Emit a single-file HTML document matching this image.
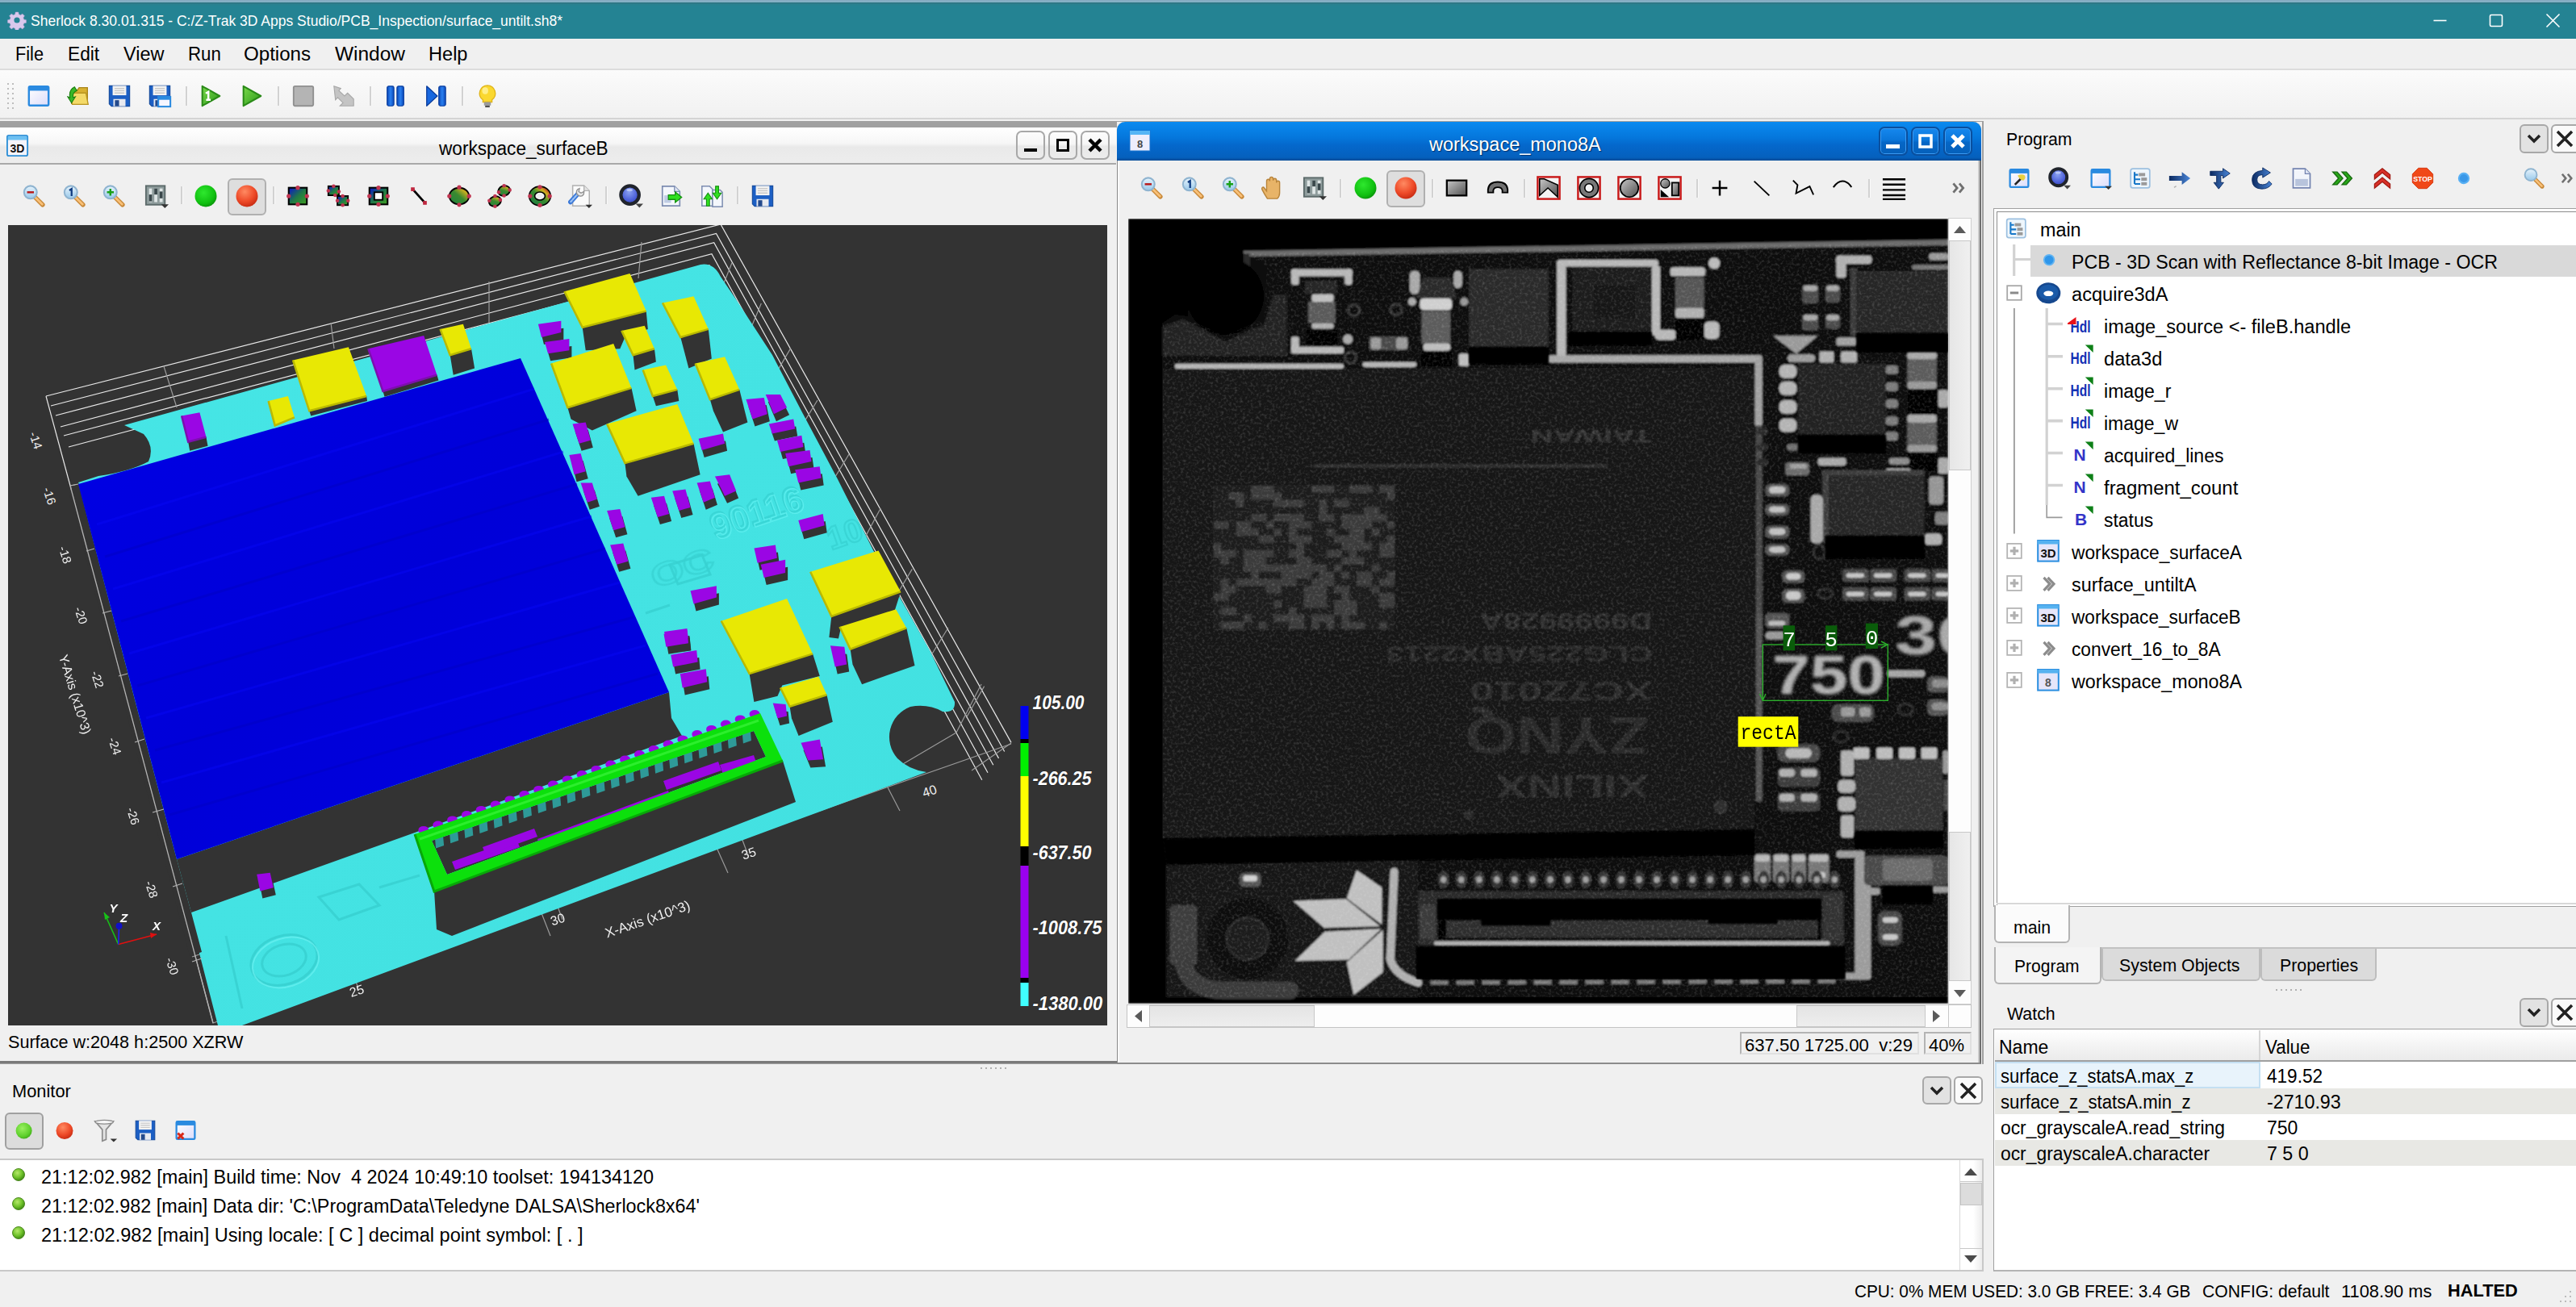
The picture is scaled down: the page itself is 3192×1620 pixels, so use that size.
<!DOCTYPE html>
<html>
<head>
<meta charset="utf-8">
<title>Sherlock</title>
<style>
*{box-sizing:border-box;margin:0;padding:0}
html,body{width:3192px;height:1620px;overflow:hidden;background:#f0f0f0;font-family:"Liberation Sans",sans-serif;color:#000}
.a{position:absolute}
.t{position:absolute;white-space:nowrap;line-height:1}
#titlebar{left:0;top:0;width:3192px;height:48px;background:linear-gradient(#2e7482 0,#2e7482 4px,#2a808f 5px,#248393 8px,#248393 100%)}
#topstrip{left:0;top:0;width:3192px;height:3px;background:linear-gradient(#86a9c0,#84b4c8)}
#menubar{left:0;top:48px;width:3192px;height:39px;background:#f0f0f0;border-bottom:2px solid #dcdcdc}
#toolbar{left:0;top:87px;width:3192px;height:61px;background:linear-gradient(#fbfbfb,#f1f1f1);border-bottom:2px solid #d4d4d4}
#mdi{left:0;top:150px;width:2458px;height:1169px;background:#a0a0a0}
.sep{position:absolute;width:2px;background:#d9d9d9}
.wb{width:36px;height:36px;border:2px solid #a8a8a8;border-radius:7px;background:linear-gradient(#fcfcfc 0%,#f6f6f6 45%,#e8e8e8 55%,#ececec 100%)}
.wb2{width:36px;height:36px;border:2px solid #0a4f9e;border-radius:7px;background:linear-gradient(#1688ee 0%,#0a76da 45%,#0566c6 55%,#0560ba 100%);box-shadow:inset 0 0 0 1px #3a9af2}
.tr{font-size:24px}
.wr{font-size:24px}
.lg{font-size:24px}
.btn{position:absolute;border:2px solid #a8a8a8;border-radius:6px;background:#e2e2e2}
</style>
</head>
<body>
<!--ICONDEFS_B--><svg width="0" height="0" style="position:absolute"><defs>
<linearGradient id="iLav" x1="0" y1="0" x2="1" y2="1"><stop offset="0" stop-color="#ffffff"/><stop offset="1" stop-color="#dcdcfa"/></linearGradient>
<linearGradient id="iGlass" x1="0" y1="0" x2="0" y2="1"><stop offset="0" stop-color="#e8f4fc"/><stop offset="1" stop-color="#98c8ea"/></linearGradient>
<radialGradient id="iG" cx="40%" cy="35%" r="70%"><stop offset="0" stop-color="#2ee82e"/><stop offset="0.7" stop-color="#10c010"/><stop offset="1" stop-color="#0a900a"/></radialGradient>
<radialGradient id="iLime" cx="40%" cy="35%" r="70%"><stop offset="0" stop-color="#9af060"/><stop offset="0.7" stop-color="#5ed02c"/><stop offset="1" stop-color="#3ea818"/></radialGradient>
<radialGradient id="iR" cx="40%" cy="30%" r="75%"><stop offset="0" stop-color="#ff8a62"/><stop offset="0.6" stop-color="#ee4a28"/><stop offset="1" stop-color="#c42810"/></radialGradient>
<linearGradient id="iBG" x1="0" y1="0" x2="1" y2="1"><stop offset="0" stop-color="#0a10d0"/><stop offset="0.5" stop-color="#207848"/><stop offset="1" stop-color="#40a020"/></linearGradient>
<linearGradient id="iGY" x1="0" y1="1" x2="1" y2="0"><stop offset="0" stop-color="#208040"/><stop offset="0.5" stop-color="#3a8a30"/><stop offset="0.8" stop-color="#d0b020"/><stop offset="1" stop-color="#c03020"/></linearGradient>
<linearGradient id="iGr" x1="0" y1="0" x2="1" y2="1"><stop offset="0" stop-color="#c8c8c8"/><stop offset="1" stop-color="#505050"/></linearGradient>
<linearGradient id="iPlay" x1="0" y1="0" x2="1" y2="1"><stop offset="0" stop-color="#7ad84a"/><stop offset="1" stop-color="#2a9a1a"/></linearGradient>
<linearGradient id="iBl" x1="0" y1="0" x2="1" y2="0"><stop offset="0" stop-color="#0a48b8"/><stop offset="0.5" stop-color="#2a80f0"/><stop offset="1" stop-color="#0a48b8"/></linearGradient>
<radialGradient id="iLens" cx="45%" cy="35%" r="65%"><stop offset="0" stop-color="#8aa0f0"/><stop offset="0.7" stop-color="#4a5ed8"/><stop offset="1" stop-color="#3848b8"/></radialGradient>
<linearGradient id="iArr" x1="0" y1="0" x2="1" y2="0"><stop offset="0" stop-color="#0c2a60"/><stop offset="1" stop-color="#4a86d8"/></linearGradient>
<symbol id="mag" viewBox="0 0 32 32"><path d="M18 18 L27.5 27.5" stroke="#c88838" stroke-width="6" stroke-linecap="round"/><path d="M18.5 18.5 L27 27" stroke="#f8c078" stroke-width="3" stroke-linecap="round"/><circle cx="11.5" cy="11" r="8.5" fill="url(#iGlass)" stroke="#8fb4d0" stroke-width="2.2"/></symbol>
<symbol id="magm" viewBox="0 0 32 32"><use href="#mag"/><path d="M7 11 H16" stroke="#b81818" stroke-width="2.6"/></symbol>
<symbol id="mag1" viewBox="0 0 32 32"><use href="#mag"/><path d="M9.5 8.5 L12.5 6.5 V16" stroke="#0e3a80" stroke-width="2.4" fill="none"/></symbol>
<symbol id="magp" viewBox="0 0 32 32"><use href="#mag"/><path d="M7 11 H16 M11.5 6.5 V15.5" stroke="#18a018" stroke-width="2.6"/></symbol>
<symbol id="sliders" viewBox="0 0 32 32"><rect x="2" y="2.5" width="25" height="25" fill="#8e9c9c" stroke="#5c6a6a" stroke-width="2"/><rect x="6" y="6" width="4" height="18" fill="#dfe6e6"/><rect x="13" y="6" width="4" height="18" fill="#dfe6e6"/><rect x="20" y="6" width="4" height="18" fill="#dfe6e6"/><rect x="6" y="14" width="4" height="9" fill="#39474a"/><rect x="13" y="6" width="4" height="8" fill="#39474a"/><rect x="20" y="10" width="4" height="9" fill="#39474a"/><path d="M22 27 H32 L27 32 Z" fill="#333"/></symbol>
<symbol id="gc" viewBox="0 0 32 32"><circle cx="16" cy="16" r="13.5" fill="url(#iG)"/></symbol>
<symbol id="rc" viewBox="0 0 32 32"><circle cx="16" cy="16" r="13.5" fill="url(#iR)"/></symbol>
<symbol id="roi1" viewBox="0 0 32 32"><rect x="4" y="5" width="24" height="22" fill="url(#iBG)" stroke="#000" stroke-width="2.2"/><g fill="#c03450"><circle cx="16" cy="5" r="2.8"/><circle cx="16" cy="27" r="2.8"/><circle cx="4" cy="16" r="2.8"/><circle cx="28" cy="16" r="2.8"/></g></symbol>
<symbol id="roi2" viewBox="0 0 32 32"><rect x="3" y="3" width="14" height="12" fill="url(#iBG)" stroke="#000" stroke-width="2"/><rect x="15" y="16" width="14" height="12" fill="url(#iBG)" stroke="#000" stroke-width="2"/><g fill="#c03450"><circle cx="10" cy="3" r="2.4"/><circle cx="3" cy="9" r="2.4"/><circle cx="17" cy="10" r="2.4"/><circle cx="22" cy="16" r="2.4"/><circle cx="29" cy="22" r="2.4"/><circle cx="22" cy="28" r="2.4"/><circle cx="12" cy="15" r="2.4"/><circle cx="15" cy="22" r="2.4"/></g></symbol>
<symbol id="roi3" viewBox="0 0 32 32"><rect x="4" y="5" width="24" height="22" fill="url(#iBG)" stroke="#000" stroke-width="2.2"/><rect x="10.5" y="11" width="11" height="10" fill="#fff" stroke="#000" stroke-width="2"/><g fill="#c03450"><circle cx="16" cy="5" r="2.8"/><circle cx="16" cy="27" r="2.8"/><circle cx="4" cy="16" r="2.8"/><circle cx="28" cy="16" r="2.8"/></g></symbol>
<symbol id="roi4" viewBox="0 0 32 32"><path d="M8 7 L24 25" stroke="#000" stroke-width="3"/><rect x="5.5" y="4.5" width="5" height="5" fill="#c02840"/><rect x="21.5" y="22.5" width="5" height="5" fill="#c02840"/></symbol>
<symbol id="roi5" viewBox="0 0 32 32"><ellipse cx="16" cy="16" rx="13" ry="11" fill="url(#iGY)" stroke="#000" stroke-width="2"/><g fill="#c03450"><circle cx="16" cy="4.5" r="2.8"/><circle cx="16" cy="27.5" r="2.8"/><circle cx="3" cy="16" r="2.8"/><circle cx="29" cy="16" r="2.8"/></g></symbol>
<symbol id="roi6" viewBox="0 0 32 32"><ellipse cx="22" cy="9" rx="8" ry="6.5" fill="url(#iGY)" stroke="#000" stroke-width="2" transform="rotate(-20 22 9)"/><ellipse cx="10" cy="23" rx="8" ry="6.5" fill="url(#iGY)" stroke="#000" stroke-width="2" transform="rotate(-20 10 23)"/><g fill="#c03450"><circle cx="22" cy="2.5" r="2.4"/><circle cx="29.5" cy="8" r="2.4"/><circle cx="15" cy="11" r="2.4"/><circle cx="10" cy="16" r="2.4"/><circle cx="2.5" cy="22" r="2.4"/><circle cx="10" cy="29.5" r="2.4"/><circle cx="17" cy="21" r="2.4"/><circle cx="22" cy="15.5" r="2.4"/></g></symbol>
<symbol id="roi7" viewBox="0 0 32 32"><ellipse cx="16" cy="16" rx="10.5" ry="9" fill="none" stroke="#000" stroke-width="9"/><ellipse cx="16" cy="16" rx="10.5" ry="9" fill="none" stroke="url(#iGY)" stroke-width="5.5"/><g fill="#c03450"><circle cx="16" cy="4" r="2.8"/><circle cx="16" cy="28" r="2.8"/><circle cx="3" cy="16" r="2.8"/><circle cx="29" cy="16" r="2.8"/></g></symbol>
<symbol id="wrench" viewBox="0 0 32 32"><path d="M6 2 H21 L28 9 V29 H6 Z" fill="#fbfbfb" stroke="#b0b0b0" stroke-width="1.6"/><path d="M21 2 V9 H28" fill="#e4e4e4" stroke="#b0b0b0" stroke-width="1.4"/><path d="M3 24 L13 13" stroke="#3a78d8" stroke-width="6" stroke-linecap="round"/><path d="M3.5 23.5 L12 14" stroke="#9cc2f4" stroke-width="2.4" stroke-linecap="round" stroke-dasharray="2 2"/><path d="M12 14 q-3 -6 3 -8 l-1 4 l3 2 l4 -2 q0 7 -6 6 z" fill="#e8e8e8" stroke="#909090" stroke-width="1.4"/><path d="M23 27.5 H32 L27.5 32 Z" fill="#333"/></symbol>
<symbol id="lens" viewBox="0 0 32 32"><circle cx="14.5" cy="14.5" r="12" fill="url(#iLens)" stroke="#20242c" stroke-width="4.5"/><ellipse cx="14" cy="8" rx="4" ry="1.8" fill="#c8d4fa" opacity="0.8"/><path d="M22 26 H32 L27 31.5 Z" fill="#444"/></symbol>
<symbol id="pgarrow" viewBox="0 0 32 32"><path d="M4 3 H20 L27 10 V29 H4 Z" fill="#f4f7fc" stroke="#7c8cb0" stroke-width="1.8"/><path d="M20 3 V10 H27" fill="#dfe6f4" stroke="#7c8cb0" stroke-width="1.4"/><rect x="6.5" y="15" width="9" height="10" fill="#c0cce4"/><path d="M12 14.5 H21 V10.5 L29.5 17.5 L21 24.5 V20.5 H12 Z" fill="#30e020" stroke="#149010" stroke-width="1.4"/></symbol>
<symbol id="pg2" viewBox="0 0 32 32"><path d="M3 3 H13 L17 7 V29 H3 Z" fill="#f4f7fc" stroke="#7c8cb0" stroke-width="1.6"/><path d="M17 8 H27 L30 11 V30 H17 Z" fill="#f4f7fc" stroke="#7c8cb0" stroke-width="1.6"/><path d="M9 29 V20 H5.5 L11 12 L16.5 20 H13 V29 Z" fill="#30e020" stroke="#149010" stroke-width="1.2"/><path d="M21 3 V12 H17.5 L23 20 L28.5 12 H25 V3 Z" fill="#30e020" stroke="#149010" stroke-width="1.2"/></symbol>
<symbol id="floppy" viewBox="0 0 32 32"><path d="M2.5 2.5 H29.5 V29.5 H5.5 L2.5 26.5 Z" fill="#1c5fc4" stroke="#144a9c" stroke-width="1.2"/><rect x="7" y="2.5" width="18" height="12.5" fill="#f2f2f2"/><path d="M9.5 6 H22.5 M9.5 9 H22.5 M9.5 12 H22.5" stroke="#c8c8c8" stroke-width="1.4"/><rect x="8" y="20" width="16" height="9.5" fill="#e8eaf0"/><rect x="10" y="21.5" width="5.5" height="8" fill="#244a8c"/></symbol>
<symbol id="floppy2" viewBox="0 0 32 32"><use href="#floppy"/><rect x="14" y="17" width="16" height="13" fill="#f6f6ff" stroke="#2a8ae0" stroke-width="2.2"/><rect x="14" y="17" width="16" height="4" fill="#2a8ae0"/></symbol>
<symbol id="win" viewBox="0 0 32 32"><rect x="3" y="3.5" width="26" height="25" rx="1.5" fill="url(#iLav)" stroke="#2a8ae0" stroke-width="2.6"/><rect x="3" y="3.5" width="26" height="5.5" fill="#2a8ae0"/></symbol>
<symbol id="windd" viewBox="0 0 32 32"><use href="#win"/><path d="M22 27 H32 L27 32 Z" fill="#333"/></symbol>
<symbol id="winwand" viewBox="0 0 32 32"><use href="#win"/><path d="M10 25 L19 16" stroke="#222" stroke-width="3"/><path d="M14 12 q6 -3 10 0 q2 4 -2 7 q-5 0 -8 -7z" fill="#e8d040"/></symbol>
<symbol id="winx" viewBox="0 0 32 32"><use href="#win"/><path d="M5 20 L13 28 M13 20 L5 28" stroke="#d82818" stroke-width="3.6"/></symbol>
<symbol id="folder" viewBox="0 0 32 32"><path d="M6 8 H14 L16 5 H27 V26 H6 Z" fill="#d8b030" stroke="#a88418" stroke-width="1.4"/><path d="M4 12 H25 L28 27 H7 Z" fill="#f4da68" stroke="#b89420" stroke-width="1.4"/><path d="M10 4 q-8 4 -6 14 l-3 -1 l5 8 l5 -8 l-3 1 q-1 -7 5 -9 z" fill="#38b828" stroke="#1a8010" stroke-width="1.2"/></symbol>
<symbol id="play" viewBox="0 0 32 32"><path d="M5 3 L28 16 L5 29 Z" fill="url(#iPlay)" stroke="#2a8a18" stroke-width="2.2" stroke-linejoin="round"/></symbol>
<symbol id="play1" viewBox="0 0 32 32"><use href="#play"/><path d="M9.5 12.5 L13 10.5 V21 M10 21 H16" stroke="#fff" stroke-width="2.6" fill="none"/></symbol>
<symbol id="stopsq" viewBox="0 0 32 32"><rect x="3" y="3" width="26" height="26" rx="2" fill="#b4b4b4" stroke="#909090" stroke-width="2"/></symbol>
<symbol id="garrow" viewBox="0 0 32 32"><path d="M3 3 L12 6 L9.5 9 L17 16 L21 12 L29 20 V29 H11 L15 25 L8 18 L5 21 Z" fill="#c4c4c4" stroke="#a8a8a8" stroke-width="1.2"/></symbol>
<symbol id="pause" viewBox="0 0 32 32"><rect x="5" y="3" width="9" height="26" rx="2" fill="url(#iBl)" stroke="#0a3c9c" stroke-width="1.2"/><rect x="18" y="3" width="9" height="26" rx="2" fill="url(#iBl)" stroke="#0a3c9c" stroke-width="1.2"/></symbol>
<symbol id="stepf" viewBox="0 0 32 32"><path d="M4 3 L18 16 L4 29 Z" fill="#1868e0" stroke="#0a3c9c" stroke-width="1.4" stroke-linejoin="round"/><rect x="20" y="3" width="9" height="26" rx="2" fill="url(#iBl)" stroke="#0a3c9c" stroke-width="1.2"/></symbol>
<symbol id="bulb" viewBox="0 0 32 32"><path d="M16 2 a10.5 10.5 0 0 1 6 19 v3 h-12 v-3 a10.5 10.5 0 0 1 6 -19z" fill="#fad830" stroke="#e0b418" stroke-width="1.4"/><ellipse cx="13" cy="9" rx="4" ry="4.5" fill="#fff4a0" opacity="0.8"/><rect x="11.5" y="24" width="9" height="4.5" fill="#9a9a9a"/><rect x="13" y="28.5" width="6" height="2.5" fill="#505050"/></symbol>
<symbol id="hand" viewBox="0 0 32 32"><path d="M9 30 q-4 -6 -7 -12 q-1 -3 2 -3 l4 5 V7 q0 -2.5 2.2 -2.5 q2 0 2 2.5 V4 q0 -2.500 2.200 -2.500 q2.200 0 2.200 2.500 V6 q0 -2.500 2.200 -2.500 q2.200 0 2.200 2.500 V9 q0 -2.300 2 -2.300 q2.200 0 2.200 2.300 V22 q0 5 -3 8 z" fill="#e8b468" stroke="#b8843a" stroke-width="1.5"/></symbol>
<symbol id="grect" viewBox="0 0 32 32"><rect x="3" y="6" width="26" height="20" fill="url(#iGr)" stroke="#000" stroke-width="2.4"/></symbol>
<symbol id="arcic" viewBox="0 0 32 32"><path d="M3 22 V18 Q4 8 16 8 Q28 8 29 18 V22 H22 V19 Q21 15 16 15 Q11 15 10 19 V22 Z" fill="#707070" stroke="#000" stroke-width="2"/></symbol>
<symbol id="rf1" viewBox="0 0 32 32"><rect x="1.500" y="1.500" width="29" height="29" fill="#f4f4f4" stroke="#c81818" stroke-width="2.6"/><path d="M4 4 H10 L28 12 V28 L15 16 L4 26 Z" fill="url(#iGr)" stroke="#000" stroke-width="1.6"/></symbol>
<symbol id="rf2" viewBox="0 0 32 32"><rect x="1.500" y="1.500" width="29" height="29" fill="#f4f4f4" stroke="#c81818" stroke-width="2.6"/><circle cx="16" cy="16" r="9" fill="none" stroke="#000" stroke-width="8.500"/><circle cx="16" cy="16" r="9" fill="none" stroke="#787878" stroke-width="5"/></symbol>
<symbol id="rf3" viewBox="0 0 32 32"><rect x="1.500" y="1.500" width="29" height="29" fill="#f4f4f4" stroke="#c81818" stroke-width="2.6"/><circle cx="16" cy="16" r="12" fill="url(#iGr)" stroke="#000" stroke-width="1.8"/></symbol>
<symbol id="rf4" viewBox="0 0 32 32"><rect x="1.500" y="1.500" width="29" height="29" fill="#f4f4f4" stroke="#c81818" stroke-width="2.6"/><circle cx="10" cy="10" r="6" fill="url(#iGr)" stroke="#000" stroke-width="1.4"/><rect x="19" y="9" width="9" height="17" fill="url(#iGr)" stroke="#000" stroke-width="2"/><path d="M4 18 L15 28 H4 Z" fill="#000"/></symbol>
<symbol id="plus" viewBox="0 0 32 32"><path d="M6 16 H26 M16 6 V26" stroke="#000" stroke-width="2.6"/></symbol>
<symbol id="dline" viewBox="0 0 32 32"><path d="M6 7 L26 26" stroke="#000" stroke-width="2"/></symbol>
<symbol id="pline" viewBox="0 0 32 32"><path d="M3 6 L9 12 L7 23 L25 14 L30 25" stroke="#000" stroke-width="2" fill="none"/></symbol>
<symbol id="arcl" viewBox="0 0 32 32"><path d="M4 15 Q10 7 16 7 Q23 7 28 15" stroke="#000" stroke-width="2.2" fill="none"/></symbol>
<symbol id="hlines" viewBox="0 0 32 32"><path d="M1 4.500 H31 M1 11.500 H31 M1 18.500 H31 M1 25.500 H31 M1 31 H31" stroke="#000" stroke-width="2.6"/></symbol>
<symbol id="chev" viewBox="0 0 32 32"><path d="M9 10 L14 16 L9 22 M17 10 L22 16 L17 22" stroke="#707070" stroke-width="3" fill="none"/></symbol>
<symbol id="tree" viewBox="0 0 32 32"><rect x="2.500" y="2.500" width="27" height="27" rx="3" fill="#eef6fc" stroke="#9cc0e0" stroke-width="2"/><path d="M8 7 V24 M8 11 H13 M8 17.500 H16 M8 24 H16" stroke="#1878c8" stroke-width="2.400" fill="none"/><rect x="14" y="8.500" width="9" height="4.500" fill="#9a9a9a"/><rect x="17.500" y="15" width="8" height="4.500" fill="#9a9a9a"/><rect x="17.500" y="21.500" width="8" height="4.500" fill="#9a9a9a"/></symbol>
<symbol id="arr" viewBox="0 0 32 32"><path d="M1 12.500 H19 V7 L31 16 L19 25 V19.500 H1 Z" fill="url(#iArr)"/><path d="M8 29 l3 -2" stroke="#b0b0b0" stroke-width="1.500"/></symbol>
<symbol id="tarr" viewBox="0 0 32 32"><path d="M2 6 H20 V2 L30 9 L20 16 V12 H17 V22 H21 L14 31 L7 22 H11 V12 H2 Z" fill="url(#iArr)" stroke="#0c2a60" stroke-width="1"/></symbol>
<symbol id="carr" viewBox="0 0 32 32"><path d="M18 1 L29 8 L18 15 V11 Q10 11 10 18 Q10 25 18 25 Q24 25 27 20 L31 24 Q26 31 17 31 Q3 31 3 18 Q3 6 18 5 Z" fill="url(#iArr)" stroke="#0c2a60" stroke-width="1"/></symbol>
<symbol id="page" viewBox="0 0 32 32"><path d="M4 2.500 H21 L28 9.500 V29.500 H4 Z" fill="#f2f5fb" stroke="#7484b0" stroke-width="2"/><path d="M21 2.500 V9.500 H28" fill="#dfe6f4" stroke="#7484b0" stroke-width="1.400"/><rect x="7" y="17" width="18" height="10" fill="#b8c4dc"/></symbol>
<symbol id="gg" viewBox="0 0 32 32"><path d="M2 7 H8 L16 16 L8 25 H2 L10 16 Z M15 7 H21 L29 16 L21 25 H15 L23 16 Z" fill="#28a818" stroke="#186a10" stroke-width="1.600"/></symbol>
<symbol id="rr" viewBox="0 0 32 32"><path d="M5 17 V11 L16 2 L27 11 V17 L16 8 Z M5 30 V24 L16 15 L27 24 V30 L16 21 Z" fill="#d83028" stroke="#a01810" stroke-width="1.400"/></symbol>
<symbol id="stopsign" viewBox="0 0 32 32"><path d="M10 1.500 H22 L30.500 10 V22 L22 30.500 H10 L1.500 22 V10 Z" fill="#f04818" stroke="#d03008" stroke-width="1"/><text x="16" y="20" font-family="Liberation Sans" font-weight="bold" font-size="10" fill="#fff" text-anchor="middle">STOP</text></symbol>
<symbol id="bdot" viewBox="0 0 32 32"><circle cx="16" cy="16" r="7" fill="#3a98e8" stroke="#58b0f4" stroke-width="2.400"/></symbol>
<symbol id="magn" viewBox="0 0 32 32"><use href="#mag"/></symbol>
<symbol id="filter" viewBox="0 0 32 32"><path d="M2 3 H26 L16.500 14 V27 L11.500 29 V14 Z" fill="#e4e4e4" stroke="#8c8c8c" stroke-width="1.800"/><ellipse cx="14" cy="4" rx="12" ry="2.500" fill="#f8f8f8" stroke="#8c8c8c" stroke-width="1.400"/><path d="M22 26 H31 L26.500 30.500 Z" fill="#333"/></symbol>
</defs></svg><!--ICONDEFS_E-->
<!-- ===== main window chrome ===== -->
<div class="a" id="titlebar"></div>
<div class="a" id="topstrip"></div>
<div class="t" id="ttl" style="left:38.0px;top:17.3px;color:#fff;font-size:18.7px;transform:scaleX(0.9366);transform-origin:0 0">Sherlock 8.30.01.315 - C:/Z-Trak 3D Apps Studio/PCB_Inspection/surface_untilt.sh8*</div>
<svg class="a" style="left:3000px;top:8px" width="192" height="36"><g stroke="#fff" stroke-width="1.600" fill="none"><path d="M15.500 17.500 H31.500"/><rect x="85.500" y="10.500" width="15" height="14" rx="1.500"/><path d="M155.500 9.500 L171.500 25.500 M171.500 9.500 L155.500 25.500"/></g></svg>
<svg class="a" style="left:9px;top:13px" width="24" height="24" viewBox="0 0 24 24"><g fill="#d9c8ec" stroke="#b8a4d4" stroke-width="0.600"><path d="M10 1 h4 l0.600 3 l2.400 1 l2.600 -1.700 l2.800 2.800 l-1.700 2.600 l1 2.400 l3 0.600 v4 l-3 0.600 l-1 2.400 l1.700 2.600 l-2.800 2.800 l-2.600 -1.700 l-2.400 1 l-0.600 3 h-4 l-0.600 -3 l-2.400 -1 l-2.600 1.700 l-2.800 -2.800 l1.700 -2.600 l-1 -2.400 l-3 -0.600 v-4 l3 -0.600 l1 -2.400 l-1.700 -2.600 l2.800 -2.800 l2.600 1.700 l2.400 -1 z" transform="translate(1.200 1.200) scale(0.900)"/></g><circle cx="12" cy="12" r="3.600" fill="#248393"/></svg>
<div class="a" id="menubar"></div>
<div class="t m" id="m1" style="left:18.6px;top:56.3px;font-size:23.5px;transform:scaleX(0.9241);transform-origin:0 0">File</div>
<div class="t m" id="m2" style="left:83.5px;top:56.3px;font-size:23.5px;transform:scaleX(0.9679);transform-origin:0 0">Edit</div>
<div class="t m" id="m3" style="left:152.6px;top:56.3px;font-size:23.5px;transform:scaleX(0.9977);transform-origin:0 0">View</div>
<div class="t m" id="m4" style="left:232.5px;top:56.3px;font-size:23.5px;transform:scaleX(0.9461);transform-origin:0 0">Run</div>
<div class="t m" id="m5" style="left:302.4px;top:56.3px;font-size:23.5px;transform:scaleX(1.0259);transform-origin:0 0">Options</div>
<div class="t m" id="m6" style="left:414.6px;top:56.3px;font-size:23.5px;transform:scaleX(1.0407);transform-origin:0 0">Window</div>
<div class="t m" id="m7" style="left:530.7px;top:56.3px;font-size:23.5px;transform:scaleX(1.0032);transform-origin:0 0">Help</div>
<div class="a" id="toolbar"></div>

<div class="a" id="mdi"></div>
<!-- ===== sub window 1 : workspace_surfaceB ===== -->
<div class="a" style="left:0;top:158px;width:1384px;height:1160px;background:#f0f0f0;border-bottom:3px solid #7a7a7a"></div>
<div class="a" style="left:0;top:158px;width:1383px;height:46px;background:linear-gradient(#ffffff 0%,#f6f6f6 45%,#e9e9e9 55%,#ededed 100%);border-bottom:2px solid #a9a9a9"></div>
<svg class="a" style="left:8px;top:167px" width="28" height="28" viewBox="0 0 30 30"><rect x="1" y="1" width="27" height="27" rx="2" fill="#f4f4fb" stroke="#2d8fd6" stroke-width="2"/><rect x="2" y="2" width="25" height="5" fill="#6cc0f2"/><text x="14.5" y="24" font-family="Liberation Sans" font-weight="bold" font-size="15" text-anchor="middle" fill="#111">3D</text></svg>
<div class="t" id="w1t" style="left:544.2px;top:173.4px;font-size:23.5px;transform:scaleX(0.9613);transform-origin:0 0">workspace_surfaceB</div>
<div class="a wb" style="left:1259px;top:162px"></div><div class="a wb" style="left:1299px;top:162px"></div><div class="a wb" style="left:1339px;top:162px"></div>
<svg class="a" style="left:1259px;top:162px" width="116" height="36" viewBox="0 0 116 36"><rect x="10" y="22" width="16" height="4" fill="#000"/><rect x="51.5" y="11.5" width="13" height="13" fill="none" stroke="#000" stroke-width="3"/><path d="M91 11 L105 25 M105 11 L91 25" stroke="#000" stroke-width="4.5"/></svg>
<!--SW1TOOLBAR-->
<svg class="a" id="scene3d" style="left:10px;top:279px" width="1362" height="992" viewBox="10 279 1362 992">
<defs>
<linearGradient id="gBlue" x1="0" y1="0" x2="1" y2="1"><stop offset="0" stop-color="#0000e6"/><stop offset="0.5" stop-color="#0000d8"/><stop offset="1" stop-color="#0000e2"/></linearGradient>
<linearGradient id="gCy" x1="0" y1="0" x2="1" y2="1"><stop offset="0" stop-color="#46e6e6"/><stop offset="1" stop-color="#42e0e0"/></linearGradient>
</defs>
<rect x="10" y="279" width="1362" height="992" fill="#333333"/>
<!-- bounding box lines -->
<g stroke="#e8e8e8" stroke-width="1.200" fill="none"><path d="M57.0 491.0 L893.0 278.0 L1253.0 920.4"/><path d="M63.0 503.0 L887.5 289.5 L1244.7 931.5"/><path d="M69.0 515.0 L884.7 300.7 L1237.5 939.9"/><path d="M75.0 529.0 L881.9 314.7 L1230.8 948.3"/><path d="M79.0 540.0 L879.0 328.6 L1224.0 957.8"/><path d="M85.0 554.0 L876.5 343.0 L1216.8 966.7"/><path d="M57 491 L87 602"/></g>
<g stroke="#9a9a9a" stroke-width="1.2" fill="none">
<path d="M87 602 L264 1268 L1253 922"/>
<path d="M203 454 L219 505 M410 400 L414 432 M606 349 L606 400 M795 300 L791 345"/>
<path d="M907.0 325.8 L895.8 353.7 M943.3 376.0 L929.3 409.6 M979.6 431.9 L960.0 465.4 M1013.0 496.0 L990.7 532.4 M1052.0 563.0 L1029.8 599.4 M1091.2 630.0 L1071.7 666.4 M1130.3 705.4 L1113.5 733.3 M1175.0 778.0 L1152.6 814.3 M1219.6 850.6 L1197.3 889.7"/>
<path d="M595 937 L682 1160 M806 867 L902 1082 M1100 976 L1115 1005 M380 1013 L396 1058"/>
<path d="M600 1110 L980 983 M1112 951 L1185 908 M1185 908 L1216 848 M1204 955 L1253 921"/>
<path d="M87 602 L97 600 M107 683 L117 680 M127 760 L138 757 M147 828 L158 825 M167 910 L179 906 M189 997 L203 993 M214 1089 L226 1085 M238 1186 L250 1182"/>
<path d="M432 1192 L444 1225 M686 1110 L697 1140 M915 1028 L927 1060"/>
</g>
<!-- board -->
<path id="board" d="M154 527 L868 328 Q884 325 893 343 L912 371 L957 440 L995 513 L1038 594 L1082 682 L1152 806 L1183 870 Q1184 884 1168 882 Q1150 872 1128 876 A40 40 0 0 0 1112 940 Q1126 954 1148 957 L300 1271 L270 1271 L97 598 L122 590 Q162 584 184 572 Q192 554 178 538 Z" fill="url(#gCy)"/>
<!-- embossed features on board -->
<g fill="none" stroke="#37d0d0" stroke-width="3" opacity="0.8">
<ellipse cx="352" cy="1190" rx="42" ry="30" transform="rotate(-18 352 1190)"/>
<ellipse cx="352" cy="1190" rx="28" ry="19" transform="rotate(-18 352 1190)"/>
<path d="M395 1112 L445 1096 L470 1122 L420 1140 Z"/>
<path d="M280 1160 L300 1250 M470 1100 L520 1085"/>


<path d="M830 700 l40 -12 l10 24 l-40 12 z M800 760 l30 -10"/>
</g>
<g fill="none" stroke="#6af2f2" stroke-width="2" opacity="0.7">
<ellipse cx="354" cy="1193" rx="42" ry="30" transform="rotate(-18 354 1193)"/>

</g>
<g font-family="Liberation Sans" font-weight="bold" fill="none" stroke-width="2.200" opacity="0.800">
<text transform="translate(886 668) rotate(-19)" font-size="44" stroke="#38d2d2" textLength="118" lengthAdjust="spacingAndGlyphs">90116</text>
<text transform="translate(888 670) rotate(-19)" font-size="44" stroke="#62f0f0" stroke-width="1.200" textLength="118" lengthAdjust="spacingAndGlyphs">90116</text>
<text transform="translate(1030 682) rotate(-19)" font-size="40" stroke="#38d2d2">10</text>
<text transform="translate(812 730) rotate(-19)" font-size="40" stroke="#38d2d2" textLength="80" lengthAdjust="spacingAndGlyphs">OC</text>
</g>
<!-- dark gap between chip and connector, connector shadow -->
<path d="M219 1065 L829 858 L832 890 L845 912 L514 1032 L237 1131 Z" fill="#333"/>
<path d="M538 1104 L970 943 L986 994 L560 1160 L541 1152 Z" fill="#333"/>
<path d="M97 598 L110 650 L219 1065 L237 1131 L250 1180 L235 1185 L85 610 Z" fill="#333"/>
<!-- big blue chip -->
<path d="M97 600 L645 444 L829 858 L219 1065 Z" fill="url(#gBlue)"/>
<g stroke="#0000c4" stroke-width="3" opacity="0.55" fill="none">
<path d="M130 690 L680 520 M150 770 L715 600 M170 850 L750 680 M192 930 L785 765 M210 1010 L815 835"/>
</g>
<g stroke="#0606f4" stroke-width="3" opacity="0.5" fill="none">
<path d="M120 650 L662 482 M140 730 L698 560 M160 810 L733 640 M181 890 L768 722 M200 970 L800 800"/>
</g>
<path d="M87 602 L264 1268" stroke="#b4b4b4" stroke-width="1.300" fill="none"/><path d="M87 602 L97 600 M107 683 L117 680 M127 760 L138 757 M147 838 L158 835 M167 920 L179 916 M189 1007 L203 1003 M214 1099 L226 1095 M238 1192 L250 1188" stroke="#b4b4b4" stroke-width="1.200" fill="none"/>
<g id="blocks"><polygon points="721.7,405.8 800.7,385.6 802.8,407.9 774.4,418.0 768.3,432.2 725.7,434.2" fill="#333333"/><polygon points="699.4,361.2 780.5,338.9 800.7,385.6 721.7,405.8" fill="#e8e804"/><polyline points="699.4,361.2 721.7,405.8 800.7,385.6" fill="none" stroke="#b9b900" stroke-width="2.5"/>
<polygon points="843.3,418.0 877.8,407.9 881.8,444.4 853.4,456.5" fill="#333333"/><polygon points="821.0,375.4 859.5,367.3 877.8,407.9 843.3,418.0" fill="#e8e804"/><polyline points="821.0,375.4 843.3,418.0 877.8,407.9" fill="none" stroke="#b9b900" stroke-width="2.5"/>
<polygon points="669.9,410.8 698.3,406.7 698.3,420.9 674.0,427.0" fill="#333333"/><polygon points="666.9,401.8 695.3,397.7 695.3,411.9 671.0,418.0" fill="#9a06e4"/>
<polygon points="678.0,433.1 708.4,429.0 708.4,443.2 682.1,447.3" fill="#333333"/><polygon points="675.0,424.1 705.4,420.0 705.4,434.2 679.1,438.3" fill="#9a06e4"/>
<polygon points="784.5,440.3 810.9,432.2 812.9,448.4 786.5,458.6" fill="#333333"/><polygon points="770.3,409.9 798.7,403.8 810.9,432.2 784.5,440.3" fill="#e8e804"/><polyline points="770.3,409.9 784.5,440.3 810.9,432.2" fill="none" stroke="#b9b900" stroke-width="2.5"/>
<polygon points="557.7,440.3 584.0,432.2 588.1,456.6 561.7,464.7" fill="#333333"/><polygon points="545.5,407.9 573.9,401.8 584.0,432.2 557.7,440.3" fill="#e8e804"/><polyline points="545.5,407.9 557.7,440.3 584.0,432.2" fill="none" stroke="#b9b900" stroke-width="2.5"/>
<polygon points="474.5,484.9 541.4,464.7 543.5,471.6 476.5,491.8" fill="#333333"/><polygon points="456.3,432.2 525.2,416.0 541.4,464.7 474.5,484.9" fill="#9a06e4"/><polyline points="456.3,432.2 474.5,484.9 541.4,464.7" fill="none" stroke="#7d0fae" stroke-width="2.5"/>
<polygon points="808.8,491.0 839.3,482.9 841.3,497.1 812.9,503.2" fill="#333333"/><polygon points="796.7,458.6 825.1,452.5 839.3,482.9 808.8,491.0" fill="#e8e804"/><polyline points="796.7,458.6 808.8,491.0 839.3,482.9" fill="none" stroke="#b9b900" stroke-width="2.5"/>
<polygon points="879.8,495.1 916.3,482.9 926.4,523.4 896.0,535.6 883.9,509.3" fill="#333333"/><polygon points="861.6,450.5 898.1,442.3 916.3,482.9 879.8,495.1" fill="#e8e804"/><polyline points="861.6,450.5 879.8,495.1 916.3,482.9" fill="none" stroke="#b9b900" stroke-width="2.5"/>
<polygon points="703.4,505.2 782.5,480.9 788.6,509.3 733.8,533.6 707.5,519.4" fill="#333333"/><polygon points="683.1,450.5 760.2,426.1 782.5,480.9 703.4,505.2" fill="#e8e804"/><polyline points="683.1,450.5 703.4,505.2 782.5,480.9" fill="none" stroke="#b9b900" stroke-width="2.5"/>
<polygon points="383.3,509.3 454.2,491.0 455.0,497.1 385.3,515.4" fill="#333333"/><polygon points="363.0,446.4 431.9,430.2 454.2,491.0 383.3,509.3" fill="#e8e804"/><polyline points="363.0,446.4 383.3,509.3 454.2,491.0" fill="none" stroke="#b9b900" stroke-width="2.5"/>
<polygon points="951.7,498.0 970.0,498.0 978.1,514.2 961.9,522.3" fill="#333333"/><polygon points="948.7,489.0 967.0,489.0 975.1,505.2 958.9,513.3" fill="#9a06e4"/>
<polygon points="927.4,504.1 949.7,502.0 953.8,522.3 935.5,528.4" fill="#333333"/><polygon points="924.4,495.1 946.7,493.0 950.8,513.3 932.5,519.4" fill="#9a06e4"/>
<polygon points="332.6,497.1 356.9,491.0 365.0,517.4 340.7,527.5" fill="#e8e804"/><polyline points="332.6,497.1 340.7,527.5 365.0,517.4" fill="none" stroke="#b9b900" stroke-width="2.5"/>
<polygon points="955.8,534.5 986.2,528.4 988.2,540.6 959.9,546.6" fill="#333333"/><polygon points="952.8,525.5 983.2,519.4 985.2,531.6 956.9,537.6" fill="#9a06e4"/>
<polygon points="233.2,547.8 255.5,541.7 257.5,552.7 235.2,558.8" fill="#333333"/><polygon points="225.1,515.4 247.4,511.3 255.5,541.7 233.2,547.8" fill="#9a06e4"/><polyline points="225.1,515.4 233.2,547.8 255.5,541.7" fill="none" stroke="#7d0fae" stroke-width="2.5"/>
<polygon points="712.5,534.5 728.7,532.4 734.8,554.8 720.6,558.8" fill="#333333"/><polygon points="709.5,525.5 725.7,523.4 731.8,545.8 717.6,549.8" fill="#9a06e4"/>
<polygon points="868.6,552.7 899.0,546.6 901.1,558.8 872.7,566.9" fill="#333333"/><polygon points="865.6,543.7 896.0,537.6 898.1,549.8 869.7,557.9" fill="#9a06e4"/>
<polygon points="965.9,554.8 996.3,548.7 998.4,562.9 970.0,568.9" fill="#333333"/><polygon points="962.9,545.8 993.3,539.7 995.4,553.9 967.0,559.9" fill="#9a06e4"/>
<polygon points="774.4,574.1 859.5,549.8 867.6,588.3 790.6,614.7 776.4,590.4" fill="#333333"/><polygon points="752.1,525.5 839.3,501.1 859.5,549.8 774.4,574.1" fill="#e8e804"/><polyline points="752.1,525.5 774.4,574.1 859.5,549.8" fill="none" stroke="#b9b900" stroke-width="2.5"/>
<polygon points="976.1,571.0 1006.5,566.9 1008.5,581.1 980.1,587.2" fill="#333333"/><polygon points="973.1,562.0 1003.5,557.9 1005.5,572.1 977.1,578.2" fill="#9a06e4"/>
<polygon points="708.4,573.0 722.6,571.0 728.7,593.3 714.5,597.3" fill="#333333"/><polygon points="705.4,564.0 719.6,562.0 725.7,584.3 711.5,588.3" fill="#9a06e4"/>
<polygon points="988.2,591.2 1018.7,587.2 1020.7,601.4 992.3,607.5" fill="#333333"/><polygon points="985.2,582.2 1015.7,578.2 1017.7,592.4 989.3,598.5" fill="#9a06e4"/>
<polygon points="888.9,599.4 907.1,597.3 915.2,617.6 901.1,623.7" fill="#333333"/><polygon points="885.9,590.4 904.1,588.3 912.2,608.6 898.1,614.7" fill="#9a06e4"/>
<polygon points="722.6,607.5 736.8,607.5 742.9,627.7 730.7,631.8" fill="#333333"/><polygon points="719.6,598.5 733.8,598.5 739.9,618.7 727.7,622.8" fill="#9a06e4"/>
<polygon points="866.6,607.5 882.8,605.4 888.9,625.7 874.7,631.8" fill="#333333"/><polygon points="863.6,598.5 879.8,596.4 885.9,616.7 871.7,622.8" fill="#9a06e4"/>
<polygon points="836.2,617.6 852.4,615.6 858.5,637.9 844.3,641.9" fill="#333333"/><polygon points="833.2,608.6 849.4,606.6 855.5,628.9 841.3,632.9" fill="#9a06e4"/>
<polygon points="809.8,625.7 826.0,623.7 832.1,646.0 817.9,650.0" fill="#333333"/><polygon points="806.8,616.7 823.0,614.7 829.1,637.0 814.9,641.0" fill="#9a06e4"/>
<polygon points="755.1,641.9 771.3,639.9 777.4,662.2 763.2,666.3" fill="#333333"/><polygon points="752.1,632.9 768.3,630.9 774.4,653.2 760.2,657.3" fill="#9a06e4"/>
<polygon points="992.3,654.1 1022.7,646.0 1024.7,660.2 996.3,668.3" fill="#333333"/><polygon points="989.3,645.1 1019.7,637.0 1021.7,651.2 993.3,659.3" fill="#9a06e4"/>
<polygon points="937.5,688.6 963.9,684.5 965.9,700.7 941.6,706.8" fill="#333333"/><polygon points="934.5,679.6 960.9,675.5 962.9,691.7 938.6,697.8" fill="#9a06e4"/>
<polygon points="759.1,684.5 775.3,682.5 781.4,704.8 767.2,708.8" fill="#333333"/><polygon points="756.1,675.5 772.3,673.5 778.4,695.8 764.2,699.8" fill="#9a06e4"/>
<polygon points="945.7,708.8 976.1,702.8 976.1,719.0 949.7,725.1" fill="#333333"/><polygon points="942.7,699.8 973.1,693.8 973.1,710.0 946.7,716.1" fill="#9a06e4"/>
<polygon points="858.5,741.3 890.9,735.2 890.9,749.4 862.5,757.5" fill="#333333"/><polygon points="855.5,732.3 887.9,726.2 887.9,740.4 859.5,748.5" fill="#9a06e4"/>
<polygon points="1030.3,763.9 1116.1,733.4 1108.8,756.6 1041.9,778.4 1039.0,791.5 1027.4,790.0" fill="#333333"/><polygon points="1004.2,708.7 1088.5,682.5 1116.1,733.4 1030.3,763.9" fill="#e8e804"/><polyline points="1004.2,708.7 1030.3,763.9 1116.1,733.4" fill="none" stroke="#b9b900" stroke-width="2.5"/>
<polygon points="826.0,792.0 854.4,787.9 856.4,806.2 830.1,809.0" fill="#333333"/><polygon points="823.0,783.0 851.4,778.9 853.4,797.2 827.1,800.0" fill="#9a06e4"/>
<polygon points="825.5,794.7 854.6,790.3 856.0,806.3 828.4,810.7" fill="#333333"/><polygon points="822.5,785.7 851.6,781.3 853.0,797.3 825.4,801.7" fill="#9a06e4"/>
<polygon points="1053.6,804.6 1123.3,778.4 1133.5,824.9 1068.1,848.2 1056.5,823.5" fill="#333333"/><polygon points="1040.5,777.0 1110.2,755.2 1123.3,778.4 1053.6,804.6" fill="#e8e804"/><polyline points="1040.5,777.0 1053.6,804.6 1123.3,778.4" fill="none" stroke="#b9b900" stroke-width="2.5"/>
<polygon points="834.2,820.8 866.2,815.0 867.6,829.6 837.1,835.4" fill="#333333"/><polygon points="831.2,811.8 863.2,806.0 864.6,820.6 834.1,826.4" fill="#9a06e4"/>
<polygon points="1031.9,809.2 1049.3,810.7 1052.2,832.5 1037.7,835.4" fill="#333333"/><polygon points="1028.9,800.2 1046.3,801.7 1049.2,823.5 1034.7,826.4" fill="#9a06e4"/>
<polygon points="928.6,835.1 1007.1,810.4 1015.8,838.0 969.3,849.6 963.5,862.7 934.4,870.0" fill="#333333"/><polygon points="893.7,769.7 975.1,742.1 1007.1,810.4 928.6,835.1" fill="#e8e804"/><polyline points="893.7,769.7 928.6,835.1 1007.1,810.4" fill="none" stroke="#b9b900" stroke-width="2.5"/>
<polygon points="845.8,844.1 877.8,838.3 879.3,854.3 848.7,861.5" fill="#333333"/><polygon points="842.8,835.1 874.8,829.3 876.3,845.3 845.7,852.5" fill="#9a06e4"/>
<polygon points="978.6,875.8 1024.5,861.3 1031.8,894.7 989.6,912.1 980.9,890.3" fill="#333333"/><polygon points="967.0,852.5 1014.3,838.6 1024.5,861.3 978.6,875.8" fill="#e8e804"/><polyline points="967.0,852.5 978.6,875.8 1024.5,861.3" fill="none" stroke="#b9b900" stroke-width="2.5"/>
<polygon points="960.7,880.4 976.6,881.9 978.1,896.4 966.5,899.3" fill="#333333"/><polygon points="957.7,871.4 973.6,872.9 975.1,887.4 963.5,890.3" fill="#9a06e4"/>
<polygon points="995.5,929.8 1018.8,925.5 1023.1,950.2 1004.3,951.6" fill="#333333"/><polygon points="992.5,920.8 1015.8,916.5 1020.1,941.2 1001.3,942.6" fill="#9a06e4"/>
<polygon points="321.2,1092.7 337.7,1090.7 341.8,1109.2 325.3,1113.4" fill="#333333"/><polygon points="318.2,1083.7 334.7,1081.7 338.8,1100.2 322.3,1104.4" fill="#9a06e4"/></g>
<g id="connector"><polygon points="535,1042 934,906 949,938 554,1084" fill="#333"/><polygon points="539.1,1039.9 549.1,1036.4 550.1,1047.9 540.1,1051.4" fill="#2e9a98"/>
<polygon points="557.2,1033.7 567.2,1030.2 568.2,1041.7 558.2,1045.2" fill="#2e9a98"/>
<polygon points="575.3,1027.5 585.3,1024.0 586.3,1035.5 576.3,1039.0" fill="#2e9a98"/>
<polygon points="593.5,1021.4 603.5,1017.9 604.5,1029.4 594.5,1032.9" fill="#2e9a98"/>
<polygon points="611.6,1015.2 621.6,1011.7 622.6,1023.2 612.6,1026.7" fill="#2e9a98"/>
<polygon points="629.8,1009.0 639.8,1005.5 640.8,1017.0 630.8,1020.5" fill="#2e9a98"/>
<polygon points="647.9,1002.8 657.9,999.3 658.9,1010.8 648.9,1014.3" fill="#2e9a98"/>
<polygon points="666.0,996.6 676.0,993.1 677.0,1004.6 667.0,1008.1" fill="#2e9a98"/>
<polygon points="684.2,990.5 694.2,987.0 695.2,998.5 685.2,1002.0" fill="#2e9a98"/>
<polygon points="702.3,984.3 712.3,980.8 713.3,992.3 703.3,995.8" fill="#2e9a98"/>
<polygon points="720.4,978.1 730.4,974.6 731.4,986.1 721.4,989.6" fill="#2e9a98"/>
<polygon points="738.6,971.9 748.6,968.4 749.6,979.9 739.6,983.4" fill="#2e9a98"/>
<polygon points="756.7,965.7 766.7,962.2 767.7,973.7 757.7,977.2" fill="#2e9a98"/>
<polygon points="774.8,959.5 784.8,956.0 785.8,967.5 775.8,971.0" fill="#2e9a98"/>
<polygon points="793.0,953.4 803.0,949.9 804.0,961.4 794.0,964.9" fill="#2e9a98"/>
<polygon points="811.1,947.2 821.1,943.7 822.1,955.2 812.1,958.7" fill="#2e9a98"/>
<polygon points="829.2,941.0 839.2,937.5 840.2,949.0 830.2,952.5" fill="#2e9a98"/>
<polygon points="847.4,934.8 857.4,931.3 858.4,942.8 848.4,946.3" fill="#2e9a98"/>
<polygon points="865.5,928.6 875.5,925.1 876.5,936.6 866.5,940.1" fill="#2e9a98"/>
<polygon points="883.7,922.5 893.7,919.0 894.7,930.5 884.7,934.0" fill="#2e9a98"/>
<polygon points="901.8,916.3 911.8,912.8 912.8,924.3 902.8,927.8" fill="#2e9a98"/>
<polygon points="919.9,910.1 929.9,906.6 930.9,918.1 920.9,921.6" fill="#2e9a98"/>
<ellipse cx="524.9" cy="1028.9" rx="6.5" ry="5" fill="#9a06e4"/>
<ellipse cx="542.8" cy="1022.6" rx="6.5" ry="5" fill="#9a06e4"/>
<ellipse cx="560.6" cy="1016.4" rx="6.5" ry="5" fill="#9a06e4"/>
<ellipse cx="578.4" cy="1010.1" rx="6.5" ry="5" fill="#9a06e4"/>
<ellipse cx="596.2" cy="1003.9" rx="6.5" ry="5" fill="#9a06e4"/>
<ellipse cx="614.1" cy="997.6" rx="6.5" ry="5" fill="#9a06e4"/>
<ellipse cx="631.9" cy="991.4" rx="6.5" ry="5" fill="#9a06e4"/>
<ellipse cx="649.8" cy="985.1" rx="6.5" ry="5" fill="#9a06e4"/>
<ellipse cx="667.6" cy="978.9" rx="6.5" ry="5" fill="#9a06e4"/>
<ellipse cx="685.4" cy="972.6" rx="6.5" ry="5" fill="#9a06e4"/>
<ellipse cx="703.2" cy="966.4" rx="6.5" ry="5" fill="#9a06e4"/>
<ellipse cx="721.1" cy="960.1" rx="6.5" ry="5" fill="#9a06e4"/>
<ellipse cx="738.9" cy="953.9" rx="6.5" ry="5" fill="#9a06e4"/>
<ellipse cx="756.8" cy="947.6" rx="6.5" ry="5" fill="#9a06e4"/>
<ellipse cx="774.6" cy="941.4" rx="6.5" ry="5" fill="#9a06e4"/>
<ellipse cx="792.4" cy="935.1" rx="6.5" ry="5" fill="#9a06e4"/>
<ellipse cx="810.2" cy="928.9" rx="6.5" ry="5" fill="#9a06e4"/>
<ellipse cx="828.1" cy="922.6" rx="6.5" ry="5" fill="#9a06e4"/>
<ellipse cx="845.9" cy="916.4" rx="6.5" ry="5" fill="#9a06e4"/>
<ellipse cx="863.8" cy="910.1" rx="6.5" ry="5" fill="#9a06e4"/>
<ellipse cx="881.6" cy="903.9" rx="6.5" ry="5" fill="#9a06e4"/>
<ellipse cx="899.4" cy="897.6" rx="6.5" ry="5" fill="#9a06e4"/>
<ellipse cx="917.2" cy="891.4" rx="6.5" ry="5" fill="#9a06e4"/>
<ellipse cx="935.1" cy="885.1" rx="6.5" ry="5" fill="#9a06e4"/>
<polygon points="560.0,1068.0 640.0,1040.0 644.0,1050.0 564.0,1078.0" fill="#9a06e4"/>
<polygon points="598.0,1050.0 662.0,1027.0 666.0,1037.0 602.0,1060.0" fill="#9a06e4"/>
<polygon points="666.0,1040.0 828.0,980.0 832.0,992.0 670.0,1052.0" fill="#9a06e4"/>
<polygon points="822.0,968.0 890.0,944.0 894.0,955.0 826.0,979.0" fill="#9a06e4"/>
<polygon points="892.0,948.0 934.0,936.0 938.0,948.0 896.0,960.0" fill="#9a06e4"/>
<path fill-rule="evenodd" fill="#0ce00c" d="M514 1034 L942 884 L970 943 L538 1105 Z M535 1042 L934 906 L949 938 L554 1084 Z"/>
<path d="M514 1034 L538 1105 L970 943" fill="none" stroke="#08a808" stroke-width="3"/>
<path d="M520 1040 L940 893" fill="none" stroke="#3cf43c" stroke-width="3" opacity="0.7"/></g>
<g id="legend"><rect x="1264.5" y="875" width="10" height="41" fill="#0000f0"/>
<rect x="1264.5" y="916" width="10" height="5" fill="#000"/>
<rect x="1264.5" y="921" width="10" height="41" fill="#00f000"/>
<rect x="1264.5" y="962" width="10" height="87" fill="#ffff00"/>
<rect x="1264.5" y="1049" width="10" height="24" fill="#000"/>
<rect x="1264.5" y="1073" width="10" height="139" fill="#9a00f0"/>
<rect x="1264.5" y="1212" width="10" height="6" fill="#000"/>
<rect x="1264.5" y="1218" width="10" height="29" fill="#40ffff"/>
<text x="1279.5" y="879.3" font-family="Liberation Sans" font-style="italic" font-weight="bold" font-size="23" fill="#fff" stroke="#000" stroke-width="0.6" paint-order="stroke" textLength="64" lengthAdjust="spacingAndGlyphs">105.00</text>
<text x="1279.5" y="973.0" font-family="Liberation Sans" font-style="italic" font-weight="bold" font-size="23" fill="#fff" stroke="#000" stroke-width="0.6" paint-order="stroke" textLength="73" lengthAdjust="spacingAndGlyphs">-266.25</text>
<text x="1279.5" y="1065.3" font-family="Liberation Sans" font-style="italic" font-weight="bold" font-size="23" fill="#fff" stroke="#000" stroke-width="0.6" paint-order="stroke" textLength="73" lengthAdjust="spacingAndGlyphs">-637.50</text>
<text x="1279.5" y="1158.3" font-family="Liberation Sans" font-style="italic" font-weight="bold" font-size="23" fill="#fff" stroke="#000" stroke-width="0.6" paint-order="stroke" textLength="86" lengthAdjust="spacingAndGlyphs">-1008.75</text>
<text x="1279.5" y="1252.3" font-family="Liberation Sans" font-style="italic" font-weight="bold" font-size="23" fill="#fff" stroke="#000" stroke-width="0.6" paint-order="stroke" textLength="86.8" lengthAdjust="spacingAndGlyphs">-1380.00</text></g>
<g id="axis"><text transform="translate(44.6 545.8) rotate(72)" font-family="Liberation Sans" font-size="15" fill="#f0f0f0" text-anchor="middle" dominant-baseline="central">-14</text>
<text transform="translate(61.6 614.7) rotate(72)" font-family="Liberation Sans" font-size="15" fill="#f0f0f0" text-anchor="middle" dominant-baseline="central">-16</text>
<text transform="translate(81.0 687.7) rotate(72)" font-family="Liberation Sans" font-size="15" fill="#f0f0f0" text-anchor="middle" dominant-baseline="central">-18</text>
<text transform="translate(100.6 762.8) rotate(72)" font-family="Liberation Sans" font-size="15" fill="#f0f0f0" text-anchor="middle" dominant-baseline="central">-20</text>
<text transform="translate(121.0 842.0) rotate(72)" font-family="Liberation Sans" font-size="15" fill="#f0f0f0" text-anchor="middle" dominant-baseline="central">-22</text>
<text transform="translate(142.6 924.6) rotate(72)" font-family="Liberation Sans" font-size="15" fill="#f0f0f0" text-anchor="middle" dominant-baseline="central">-24</text>
<text transform="translate(165.3 1011.4) rotate(72)" font-family="Liberation Sans" font-size="15" fill="#f0f0f0" text-anchor="middle" dominant-baseline="central">-26</text>
<text transform="translate(188.0 1102.3) rotate(72)" font-family="Liberation Sans" font-size="15" fill="#f0f0f0" text-anchor="middle" dominant-baseline="central">-28</text>
<text transform="translate(213.6 1197.4) rotate(72)" font-family="Liberation Sans" font-size="15" fill="#f0f0f0" text-anchor="middle" dominant-baseline="central">-30</text>
<text transform="translate(93.0 860.6) rotate(73)" font-family="Liberation Sans" font-size="16" fill="#f0f0f0" text-anchor="middle" dominant-baseline="central">Y-Axis (x10^3)</text>
<text transform="translate(442.0 1228.0) rotate(-18)" font-family="Liberation Sans" font-size="16" fill="#f0f0f0" text-anchor="middle" dominant-baseline="central">25</text>
<text transform="translate(691.0 1139.5) rotate(-18)" font-family="Liberation Sans" font-size="16" fill="#f0f0f0" text-anchor="middle" dominant-baseline="central">30</text>
<text transform="translate(927.7 1057.7) rotate(-18)" font-family="Liberation Sans" font-size="16" fill="#f0f0f0" text-anchor="middle" dominant-baseline="central">35</text>
<text transform="translate(1151.7 980.4) rotate(-18)" font-family="Liberation Sans" font-size="16" fill="#f0f0f0" text-anchor="middle" dominant-baseline="central">40</text>
<text transform="translate(802.5 1139.5) rotate(-19)" font-family="Liberation Sans" font-size="17" fill="#f0f0f0" text-anchor="middle" dominant-baseline="central">X-Axis (x10^3)</text>
<path d="M146.7 1170.5 L194 1158" stroke="#e01010" stroke-width="1.6"/><path d="M146.7 1170.5 L129 1131" stroke="#18c018" stroke-width="1.6"/><path d="M146.7 1170.5 L147.5 1150" stroke="#2020f0" stroke-width="1.6"/><circle cx="147.5" cy="1147.8" r="4" fill="#1010c8"/><path d="M194 1158 l-8 -2 l1 7 z" fill="#e01010"/><path d="M129 1131 l7 6 l-6 3 z" fill="#18c018"/>
<text x="140.5" y="1125.0" font-family="Liberation Sans" font-style="italic" font-weight="bold" font-size="15" fill="#fff" text-anchor="middle" dominant-baseline="central">Y</text>
<text x="153.7" y="1137.4" font-family="Liberation Sans" font-style="italic" font-weight="bold" font-size="15" fill="#fff" text-anchor="middle" dominant-baseline="central">Z</text>
<text x="194.0" y="1147.8" font-family="Liberation Sans" font-style="italic" font-weight="bold" font-size="15" fill="#fff" text-anchor="middle" dominant-baseline="central">X</text></g>
</svg>

<div class="t" id="w1s" style="left:10.3px;top:1280.6px;font-size:21.8px;transform:scaleX(0.9911);transform-origin:0 0">Surface w:2048 h:2500 XZRW</div>

<!-- ===== sub window 2 : workspace_mono8A ===== -->
<div class="a" style="left:1384px;top:151px;width:1072px;height:1168px;background:#f0f0f0"></div><div class="a" style="left:1384px;top:151px;width:1071px;height:1168px;background:#f0f0f0;border:2px solid #8c8c8c;border-left:1.5px solid #8a8a8a;border-right-color:#6e6e6e;border-top:none;border-radius:10px 10px 0 0;box-shadow:inset -2px 0 0 #cacaca, inset 2px 0 0 #fafafa"></div>
<div class="a" style="left:1384px;top:151px;width:1071px;height:48px;background:linear-gradient(#0a8af0 0%,#0577dc 40%,#0468cc 60%,#0560bd 92%,#044a95 100%);border-radius:10px 10px 0 0"></div>
<svg class="a" style="left:1399px;top:161px" width="28" height="28" viewBox="0 0 28 28"><rect x="1" y="1" width="25" height="25" fill="#eeeefc" stroke="#1b74d0" stroke-width="1"/><rect x="1" y="1" width="25" height="5" fill="#55b5f5"/><text x="13.5" y="22" font-family="Liberation Sans" font-weight="bold" font-size="13" text-anchor="middle" fill="#444">8</text></svg>
<div class="t" id="w2t" style="left:1770.6px;top:167.5px;color:#fff;text-shadow:1px 1px 1px #00306a;font-size:23.5px;transform:scaleX(0.9989);transform-origin:0 0">workspace_mono8A</div>
<div class="a wb2" style="left:2328px;top:157px"></div><div class="a wb2" style="left:2368px;top:157px"></div><div class="a wb2" style="left:2408px;top:157px"></div>
<svg class="a" style="left:2328px;top:157px" width="116" height="36" viewBox="0 0 116 36"><rect x="9" y="22" width="17" height="5" fill="#fff"/><rect x="51" y="11" width="14" height="14" fill="none" stroke="#fff" stroke-width="3.5"/><path d="M91 11 L105 25 M105 11 L91 25" stroke="#fff" stroke-width="5"/></svg>
<!--SW2TOOLBAR-->
<!--MONO_BEGIN--><svg class="a" id="monoimg" style="left:1398px;top:271px" width="1016" height="974" viewBox="1398 271 1016 974">
<defs>
<filter id="mb" x="0" y="0" width="100%" height="100%"><feGaussianBlur stdDeviation="1.3"/></filter>
<filter id="mb2" x="-5%" y="-20%" width="110%" height="140%"><feGaussianBlur stdDeviation="1.6"/></filter>
<filter id="noise" x="0" y="0" width="100%" height="100%"><feTurbulence type="fractalNoise" baseFrequency="0.3" numOctaves="2" seed="7" result="n"/><feColorMatrix in="n" type="matrix" values="0 0 0 0 1  0 0 0 0 1  0 0 0 0 1  2.2 0 0 0 -1.0"/></filter>
<clipPath id="mclip"><rect x="1398" y="271" width="1016" height="974"/></clipPath>
<clipPath id="nclip"><polygon points="1541,314 2414,300 2414,1236 1445,1236 1445,1072 1441,1039 1441,402 1470,395 1518,416 1566,395 1570,330"/></clipPath>
</defs>
<g clip-path="url(#mclip)">
<g filter="url(#mb)">
<rect x="1398.0" y="271.0" width="1016.0" height="973.0" fill="#000"/>
<polygon points="1441.0,314.0 2414.0,300.0 2414.0,1236.0 1445.0,1236.0 1445.0,1072.0 1440.0,1039.0 1440.0,314.0" fill="#0d0d0d"/>
<polygon points="1541.0,311.0 2414.0,297.0 2414.0,304.0 1541.0,318.0" fill="#6c6c6c"/>
<rect x="1541.0" y="314.0" width="8.0" height="21.0" fill="#2c2c2c"/>
<polygon points="1440.8,404.6 1465.9,395.0 1518.4,423.5 1566.6,401.7 1577.9,364.8 1594.7,364.8 1594.7,441.1 1440.8,441.1" fill="#242424"/>
<rect x="1398.0" y="271.0" width="143.0" height="96.0" fill="#000"/>
<circle cx="1518" cy="367" r="48" fill="#000"/>
<polygon points="1398.0,367.0 1472.0,367.0 1472.0,392.0 1456.0,390.0 1441.0,400.0 1398.0,400.0" fill="#000"/>
<polygon points="1441.0,457.0 2177.0,455.0 2174.0,1028.0 1441.0,1039.0" fill="#131313"/>
<polygon points="1441.0,1039.0 2174.0,1028.0 2174.0,1060.0 1445.0,1072.0" fill="#000"/>
<rect x="1503.7" y="601.7" width="224.3" height="178.2" fill="#3a3a3a"/>
<rect x="1503.7" y="601.7" width="46.7" height="8.9" fill="#1f1f1f"/>
<rect x="1578.5" y="601.7" width="9.3" height="8.9" fill="#1f1f1f"/>
<rect x="1587.8" y="601.7" width="37.4" height="8.9" fill="#1f1f1f"/>
<rect x="1653.3" y="601.7" width="18.7" height="8.9" fill="#1f1f1f"/>
<rect x="1700.0" y="601.7" width="9.3" height="8.9" fill="#1f1f1f"/>
<rect x="1503.7" y="610.6" width="9.3" height="8.9" fill="#1f1f1f"/>
<rect x="1513.0" y="610.6" width="9.3" height="8.9" fill="#1f1f1f"/>
<rect x="1541.1" y="610.6" width="9.3" height="8.9" fill="#1f1f1f"/>
<rect x="1587.8" y="610.6" width="9.3" height="8.9" fill="#1f1f1f"/>
<rect x="1597.2" y="610.6" width="28.0" height="8.9" fill="#1f1f1f"/>
<rect x="1625.2" y="610.6" width="18.7" height="8.9" fill="#1f1f1f"/>
<rect x="1643.9" y="610.6" width="9.3" height="8.9" fill="#1f1f1f"/>
<rect x="1653.3" y="610.6" width="18.7" height="8.9" fill="#1f1f1f"/>
<rect x="1672.0" y="610.6" width="9.3" height="8.9" fill="#1f1f1f"/>
<rect x="1681.3" y="610.6" width="9.3" height="8.9" fill="#1f1f1f"/>
<rect x="1690.7" y="610.6" width="18.7" height="8.9" fill="#1f1f1f"/>
<rect x="1709.4" y="610.6" width="9.3" height="8.9" fill="#1f1f1f"/>
<rect x="1503.7" y="619.5" width="28.0" height="8.9" fill="#1f1f1f"/>
<rect x="1541.1" y="619.5" width="28.0" height="8.9" fill="#1f1f1f"/>
<rect x="1569.1" y="619.5" width="9.3" height="8.9" fill="#1f1f1f"/>
<rect x="1615.9" y="619.5" width="18.7" height="8.9" fill="#1f1f1f"/>
<rect x="1643.9" y="619.5" width="9.3" height="8.9" fill="#1f1f1f"/>
<rect x="1672.0" y="619.5" width="18.7" height="8.9" fill="#1f1f1f"/>
<rect x="1690.7" y="619.5" width="18.7" height="8.9" fill="#1f1f1f"/>
<rect x="1709.4" y="619.5" width="18.7" height="8.9" fill="#1f1f1f"/>
<rect x="1503.7" y="628.4" width="18.7" height="8.9" fill="#1f1f1f"/>
<rect x="1522.4" y="628.4" width="28.0" height="8.9" fill="#1f1f1f"/>
<rect x="1550.4" y="628.4" width="46.7" height="8.9" fill="#1f1f1f"/>
<rect x="1597.2" y="628.4" width="18.7" height="8.9" fill="#1f1f1f"/>
<rect x="1615.9" y="628.4" width="9.3" height="8.9" fill="#1f1f1f"/>
<rect x="1625.2" y="628.4" width="9.3" height="8.9" fill="#1f1f1f"/>
<rect x="1643.9" y="628.4" width="9.3" height="8.9" fill="#1f1f1f"/>
<rect x="1653.3" y="628.4" width="18.7" height="8.9" fill="#1f1f1f"/>
<rect x="1672.0" y="628.4" width="9.3" height="8.9" fill="#1f1f1f"/>
<rect x="1681.3" y="628.4" width="9.3" height="8.9" fill="#1f1f1f"/>
<rect x="1709.4" y="628.4" width="18.7" height="8.9" fill="#1f1f1f"/>
<rect x="1503.7" y="637.3" width="28.0" height="8.9" fill="#1f1f1f"/>
<rect x="1531.7" y="637.3" width="18.7" height="8.9" fill="#1f1f1f"/>
<rect x="1569.1" y="637.3" width="9.3" height="8.9" fill="#1f1f1f"/>
<rect x="1615.9" y="637.3" width="18.7" height="8.9" fill="#1f1f1f"/>
<rect x="1653.3" y="637.3" width="9.3" height="8.9" fill="#1f1f1f"/>
<rect x="1718.7" y="637.3" width="9.3" height="8.9" fill="#1f1f1f"/>
<rect x="1522.4" y="646.2" width="9.3" height="8.9" fill="#1f1f1f"/>
<rect x="1550.4" y="646.2" width="9.3" height="8.9" fill="#1f1f1f"/>
<rect x="1559.8" y="646.2" width="9.3" height="8.9" fill="#1f1f1f"/>
<rect x="1578.5" y="646.2" width="18.7" height="8.9" fill="#1f1f1f"/>
<rect x="1625.2" y="646.2" width="18.7" height="8.9" fill="#1f1f1f"/>
<rect x="1643.9" y="646.2" width="9.3" height="8.9" fill="#1f1f1f"/>
<rect x="1653.3" y="646.2" width="9.3" height="8.9" fill="#1f1f1f"/>
<rect x="1700.0" y="646.2" width="9.3" height="8.9" fill="#1f1f1f"/>
<rect x="1709.4" y="646.2" width="9.3" height="8.9" fill="#1f1f1f"/>
<rect x="1503.7" y="655.1" width="9.3" height="8.9" fill="#1f1f1f"/>
<rect x="1513.0" y="655.1" width="18.7" height="8.9" fill="#1f1f1f"/>
<rect x="1559.8" y="655.1" width="18.7" height="8.9" fill="#1f1f1f"/>
<rect x="1587.8" y="655.1" width="9.3" height="8.9" fill="#1f1f1f"/>
<rect x="1606.5" y="655.1" width="9.3" height="8.9" fill="#1f1f1f"/>
<rect x="1615.9" y="655.1" width="9.3" height="8.9" fill="#1f1f1f"/>
<rect x="1625.2" y="655.1" width="18.7" height="8.9" fill="#1f1f1f"/>
<rect x="1653.3" y="655.1" width="18.7" height="8.9" fill="#1f1f1f"/>
<rect x="1690.7" y="655.1" width="9.3" height="8.9" fill="#1f1f1f"/>
<rect x="1709.4" y="655.1" width="9.3" height="8.9" fill="#1f1f1f"/>
<rect x="1718.7" y="655.1" width="9.3" height="8.9" fill="#1f1f1f"/>
<rect x="1503.7" y="664.1" width="9.3" height="8.9" fill="#1f1f1f"/>
<rect x="1513.0" y="664.1" width="9.3" height="8.9" fill="#1f1f1f"/>
<rect x="1522.4" y="664.1" width="9.3" height="8.9" fill="#1f1f1f"/>
<rect x="1531.7" y="664.1" width="18.7" height="8.9" fill="#1f1f1f"/>
<rect x="1550.4" y="664.1" width="9.3" height="8.9" fill="#1f1f1f"/>
<rect x="1578.5" y="664.1" width="18.7" height="8.9" fill="#1f1f1f"/>
<rect x="1625.2" y="664.1" width="18.7" height="8.9" fill="#1f1f1f"/>
<rect x="1643.9" y="664.1" width="9.3" height="8.9" fill="#1f1f1f"/>
<rect x="1690.7" y="664.1" width="9.3" height="8.9" fill="#1f1f1f"/>
<rect x="1700.0" y="664.1" width="9.3" height="8.9" fill="#1f1f1f"/>
<rect x="1709.4" y="664.1" width="9.3" height="8.9" fill="#1f1f1f"/>
<rect x="1513.0" y="673.0" width="18.7" height="8.9" fill="#1f1f1f"/>
<rect x="1531.7" y="673.0" width="9.3" height="8.9" fill="#1f1f1f"/>
<rect x="1541.1" y="673.0" width="28.0" height="8.9" fill="#1f1f1f"/>
<rect x="1569.1" y="673.0" width="9.3" height="8.9" fill="#1f1f1f"/>
<rect x="1578.5" y="673.0" width="9.3" height="8.9" fill="#1f1f1f"/>
<rect x="1587.8" y="673.0" width="9.3" height="8.9" fill="#1f1f1f"/>
<rect x="1597.2" y="673.0" width="9.3" height="8.9" fill="#1f1f1f"/>
<rect x="1615.9" y="673.0" width="9.3" height="8.9" fill="#1f1f1f"/>
<rect x="1625.2" y="673.0" width="37.4" height="8.9" fill="#1f1f1f"/>
<rect x="1700.0" y="673.0" width="9.3" height="8.9" fill="#1f1f1f"/>
<rect x="1531.7" y="681.9" width="9.3" height="8.9" fill="#1f1f1f"/>
<rect x="1578.5" y="681.9" width="9.3" height="8.9" fill="#1f1f1f"/>
<rect x="1587.8" y="681.9" width="9.3" height="8.9" fill="#1f1f1f"/>
<rect x="1615.9" y="681.9" width="28.0" height="8.9" fill="#1f1f1f"/>
<rect x="1662.6" y="681.9" width="9.3" height="8.9" fill="#1f1f1f"/>
<rect x="1681.3" y="681.9" width="9.3" height="8.9" fill="#1f1f1f"/>
<rect x="1690.7" y="681.9" width="18.7" height="8.9" fill="#1f1f1f"/>
<rect x="1503.7" y="690.8" width="9.3" height="8.9" fill="#1f1f1f"/>
<rect x="1522.4" y="690.8" width="18.7" height="8.9" fill="#1f1f1f"/>
<rect x="1569.1" y="690.8" width="37.4" height="8.9" fill="#1f1f1f"/>
<rect x="1625.2" y="690.8" width="28.0" height="8.9" fill="#1f1f1f"/>
<rect x="1653.3" y="690.8" width="9.3" height="8.9" fill="#1f1f1f"/>
<rect x="1690.7" y="690.8" width="9.3" height="8.9" fill="#1f1f1f"/>
<rect x="1700.0" y="690.8" width="28.0" height="8.9" fill="#1f1f1f"/>
<rect x="1503.7" y="699.7" width="28.0" height="8.9" fill="#1f1f1f"/>
<rect x="1531.7" y="699.7" width="9.3" height="8.9" fill="#1f1f1f"/>
<rect x="1643.9" y="699.7" width="9.3" height="8.9" fill="#1f1f1f"/>
<rect x="1662.6" y="699.7" width="18.7" height="8.9" fill="#1f1f1f"/>
<rect x="1681.3" y="699.7" width="18.7" height="8.9" fill="#1f1f1f"/>
<rect x="1709.4" y="699.7" width="18.7" height="8.9" fill="#1f1f1f"/>
<rect x="1503.7" y="708.6" width="18.7" height="8.9" fill="#1f1f1f"/>
<rect x="1522.4" y="708.6" width="9.3" height="8.9" fill="#1f1f1f"/>
<rect x="1531.7" y="708.6" width="18.7" height="8.9" fill="#1f1f1f"/>
<rect x="1559.8" y="708.6" width="9.3" height="8.9" fill="#1f1f1f"/>
<rect x="1569.1" y="708.6" width="9.3" height="8.9" fill="#1f1f1f"/>
<rect x="1578.5" y="708.6" width="9.3" height="8.9" fill="#1f1f1f"/>
<rect x="1625.2" y="708.6" width="9.3" height="8.9" fill="#1f1f1f"/>
<rect x="1653.3" y="708.6" width="9.3" height="8.9" fill="#1f1f1f"/>
<rect x="1672.0" y="708.6" width="9.3" height="8.9" fill="#1f1f1f"/>
<rect x="1700.0" y="708.6" width="9.3" height="8.9" fill="#1f1f1f"/>
<rect x="1709.4" y="708.6" width="9.3" height="8.9" fill="#1f1f1f"/>
<rect x="1503.7" y="717.5" width="9.3" height="8.9" fill="#1f1f1f"/>
<rect x="1522.4" y="717.5" width="9.3" height="8.9" fill="#1f1f1f"/>
<rect x="1606.5" y="717.5" width="18.7" height="8.9" fill="#1f1f1f"/>
<rect x="1653.3" y="717.5" width="28.0" height="8.9" fill="#1f1f1f"/>
<rect x="1700.0" y="717.5" width="9.3" height="8.9" fill="#1f1f1f"/>
<rect x="1503.7" y="726.4" width="9.3" height="8.9" fill="#1f1f1f"/>
<rect x="1531.7" y="726.4" width="9.3" height="8.9" fill="#1f1f1f"/>
<rect x="1541.1" y="726.4" width="9.3" height="8.9" fill="#1f1f1f"/>
<rect x="1550.4" y="726.4" width="18.7" height="8.9" fill="#1f1f1f"/>
<rect x="1587.8" y="726.4" width="18.7" height="8.9" fill="#1f1f1f"/>
<rect x="1606.5" y="726.4" width="9.3" height="8.9" fill="#1f1f1f"/>
<rect x="1643.9" y="726.4" width="9.3" height="8.9" fill="#1f1f1f"/>
<rect x="1672.0" y="726.4" width="28.0" height="8.9" fill="#1f1f1f"/>
<rect x="1709.4" y="726.4" width="9.3" height="8.9" fill="#1f1f1f"/>
<rect x="1718.7" y="726.4" width="9.3" height="8.9" fill="#1f1f1f"/>
<rect x="1522.4" y="735.3" width="9.3" height="8.9" fill="#1f1f1f"/>
<rect x="1531.7" y="735.3" width="9.3" height="8.9" fill="#1f1f1f"/>
<rect x="1541.1" y="735.3" width="28.0" height="8.9" fill="#1f1f1f"/>
<rect x="1569.1" y="735.3" width="9.3" height="8.9" fill="#1f1f1f"/>
<rect x="1578.5" y="735.3" width="9.3" height="8.9" fill="#1f1f1f"/>
<rect x="1587.8" y="735.3" width="28.0" height="8.9" fill="#1f1f1f"/>
<rect x="1643.9" y="735.3" width="18.7" height="8.9" fill="#1f1f1f"/>
<rect x="1672.0" y="735.3" width="18.7" height="8.9" fill="#1f1f1f"/>
<rect x="1690.7" y="735.3" width="9.3" height="8.9" fill="#1f1f1f"/>
<rect x="1700.0" y="735.3" width="9.3" height="8.9" fill="#1f1f1f"/>
<rect x="1503.7" y="744.2" width="9.3" height="8.9" fill="#1f1f1f"/>
<rect x="1513.0" y="744.2" width="9.3" height="8.9" fill="#1f1f1f"/>
<rect x="1522.4" y="744.2" width="9.3" height="8.9" fill="#1f1f1f"/>
<rect x="1531.7" y="744.2" width="46.7" height="8.9" fill="#1f1f1f"/>
<rect x="1587.8" y="744.2" width="9.3" height="8.9" fill="#1f1f1f"/>
<rect x="1597.2" y="744.2" width="18.7" height="8.9" fill="#1f1f1f"/>
<rect x="1643.9" y="744.2" width="9.3" height="8.9" fill="#1f1f1f"/>
<rect x="1681.3" y="744.2" width="28.0" height="8.9" fill="#1f1f1f"/>
<rect x="1503.7" y="753.1" width="9.3" height="8.9" fill="#1f1f1f"/>
<rect x="1531.7" y="753.1" width="37.4" height="8.9" fill="#1f1f1f"/>
<rect x="1569.1" y="753.1" width="9.3" height="8.9" fill="#1f1f1f"/>
<rect x="1578.5" y="753.1" width="18.7" height="8.9" fill="#1f1f1f"/>
<rect x="1606.5" y="753.1" width="18.7" height="8.9" fill="#1f1f1f"/>
<rect x="1625.2" y="753.1" width="28.0" height="8.9" fill="#1f1f1f"/>
<rect x="1681.3" y="753.1" width="18.7" height="8.9" fill="#1f1f1f"/>
<rect x="1700.0" y="753.1" width="28.0" height="8.9" fill="#1f1f1f"/>
<rect x="1503.7" y="762.1" width="18.7" height="8.9" fill="#1f1f1f"/>
<rect x="1522.4" y="762.1" width="18.7" height="8.9" fill="#1f1f1f"/>
<rect x="1550.4" y="762.1" width="28.0" height="8.9" fill="#1f1f1f"/>
<rect x="1615.9" y="762.1" width="9.3" height="8.9" fill="#1f1f1f"/>
<rect x="1653.3" y="762.1" width="9.3" height="8.9" fill="#1f1f1f"/>
<rect x="1672.0" y="762.1" width="37.4" height="8.9" fill="#1f1f1f"/>
<rect x="1709.4" y="762.1" width="9.3" height="8.9" fill="#1f1f1f"/>
<rect x="1718.7" y="762.1" width="9.3" height="8.9" fill="#1f1f1f"/>
<rect x="1503.7" y="771.0" width="9.3" height="8.9" fill="#1f1f1f"/>
<rect x="1541.1" y="771.0" width="18.7" height="8.9" fill="#1f1f1f"/>
<rect x="1569.1" y="771.0" width="9.3" height="8.9" fill="#1f1f1f"/>
<rect x="1578.5" y="771.0" width="9.3" height="8.9" fill="#1f1f1f"/>
<rect x="1587.8" y="771.0" width="9.3" height="8.9" fill="#1f1f1f"/>
<rect x="1615.9" y="771.0" width="9.3" height="8.9" fill="#1f1f1f"/>
<rect x="1634.6" y="771.0" width="9.3" height="8.9" fill="#1f1f1f"/>
<rect x="1653.3" y="771.0" width="9.3" height="8.9" fill="#1f1f1f"/>
<rect x="1690.7" y="771.0" width="18.7" height="8.9" fill="#1f1f1f"/>
<rect x="1718.7" y="771.0" width="9.3" height="8.9" fill="#1f1f1f"/>
<text transform="translate(2046.6 532.5) scale(-1 -1)" font-family="Liberation Sans" font-size="22" font-weight="bold" fill="#343434" textLength="150" lengthAdjust="spacingAndGlyphs">TAIWAN</text>
<rect x="1627.4" y="575.3" width="364.7" height="4.6" fill="#2e2e2e"/>
<text transform="translate(2047.4 760.0) scale(-1 -1)" font-family="Liberation Sans" font-size="30" font-weight="bold" fill="#303030" textLength="214" lengthAdjust="spacingAndGlyphs">D9999928A</text>
<text transform="translate(2047.4 801.4) scale(-1 -1)" font-family="Liberation Sans" font-size="28" font-weight="bold" fill="#2e2e2e" textLength="330" lengthAdjust="spacingAndGlyphs">CLG225ABX2213</text>
<text transform="translate(2047.4 845.1) scale(-1 -1)" font-family="Liberation Sans" font-size="34" font-weight="bold" fill="#2e2e2e" textLength="226" lengthAdjust="spacingAndGlyphs">XC7Z010</text>
<text transform="translate(2043.0 888.7) scale(-1 -1)" font-family="Liberation Sans" font-size="64" font-weight="bold" fill="#2c2c2c" textLength="228" lengthAdjust="spacingAndGlyphs">ZYNQ</text>
<text transform="translate(2043.0 960.6) scale(-1 -1)" font-family="Liberation Sans" font-size="38" font-weight="bold" fill="#2e2e2e" textLength="190" lengthAdjust="spacingAndGlyphs">XILINX</text>
<circle cx="2132" cy="1000" r="9" fill="#2e2e2e"/>
<circle cx="1820" cy="1010" r="6" fill="#2a2a2a"/>
<rect x="1455.5" y="450.8" width="209.6" height="6.3" fill="#b4b4b4" rx="4"/>
<rect x="1688.2" y="448.7" width="67.1" height="6.3" fill="#b4b4b4" rx="4"/>
<rect x="1600.1" y="333.4" width="75.5" height="9.2" fill="#b8b8b8" rx="3"/>
<rect x="1600.1" y="333.4" width="9.6" height="19.7" fill="#b8b8b8" rx="3"/>
<rect x="1666.3" y="333.4" width="9.2" height="19.7" fill="#b8b8b8" rx="3"/>
<rect x="1600.1" y="417.2" width="9.6" height="21.0" fill="#b8b8b8" rx="3"/>
<rect x="1600.1" y="429.8" width="65.0" height="8.4" fill="#b8b8b8" rx="3"/>
<rect x="1616.9" y="348.0" width="39.8" height="16.8" fill="#262626"/>
<rect x="1625.3" y="364.8" width="27.3" height="9.2" fill="#c0c0c0" rx="3"/>
<rect x="1621.1" y="374.0" width="33.5" height="26.4" fill="#5a5a5a"/>
<rect x="1625.3" y="400.4" width="27.3" height="7.1" fill="#b0b0b0" rx="3"/>
<rect x="1619.0" y="408.8" width="37.7" height="18.9" fill="#000"/>
<circle cx="1677.7" cy="384.5" r="7" fill="none" stroke="#383838" stroke-width="3"/>
<circle cx="1730.1" cy="383.7" r="7" fill="none" stroke="#383838" stroke-width="3"/>
<circle cx="1673.5" cy="443.2" r="7" fill="none" stroke="#383838" stroke-width="3"/>
<circle cx="1670.1" cy="420.6" r="6" fill="#aaa"/>
<rect x="1696.5" y="417.2" width="48.2" height="16.8" fill="#4a4a4a" rx="3"/>
<rect x="1698.6" y="418.5" width="12.6" height="14.3" fill="#9a9a9a" rx="3"/>
<rect x="1730.1" y="418.5" width="13.8" height="14.3" fill="#9a9a9a" rx="3"/>
<rect x="1746.8" y="335.5" width="12.6" height="29.3" fill="#a8a8a8" rx="6"/>
<rect x="1801.3" y="335.5" width="10.5" height="21.8" fill="#a8a8a8" rx="6"/>
<polygon points="1763.6,343.9 1797.2,343.9 1805.5,369.8 1755.2,369.8" fill="#2c2c2c"/>
<rect x="1759.4" y="369.8" width="39.8" height="14.7" fill="#cfcfcf" rx="5"/>
<rect x="1761.5" y="385.8" width="35.6" height="39.8" fill="#5c5c5c"/>
<rect x="1763.6" y="425.6" width="33.5" height="9.2" fill="#bdbdbd" rx="4"/>
<rect x="1761.5" y="436.1" width="37.7" height="17.6" fill="#000"/>
<circle cx="1749.8" cy="374.0" r="5" fill="#aaa"/>
<circle cx="1814.3" cy="374.0" r="5" fill="#999"/>
<rect x="1807.6" y="438.2" width="12.6" height="15.5" fill="#bdbdbd" rx="3"/>
<rect x="1820.2" y="333.4" width="98.5" height="96.4" fill="#2b2b2b"/>
<rect x="1820.2" y="429.8" width="98.5" height="21.8" fill="#000"/>
<rect x="1929.2" y="322.9" width="11.3" height="120.3" fill="#b8b8b8" rx="4"/>
<rect x="1929.2" y="322.0" width="125.8" height="8.4" fill="#b8b8b8" rx="4"/>
<rect x="2046.6" y="329.2" width="10.5" height="86.8" fill="#b8b8b8" rx="4"/>
<rect x="2050.8" y="408.8" width="26.0" height="12.6" fill="#b8b8b8" rx="5"/>
<rect x="2111.6" y="398.4" width="18.9" height="21.8" fill="#b8b8b8" rx="6"/>
<circle cx="2124.2" cy="326.2" r="7" fill="#bbb"/>
<rect x="1948.1" y="331.3" width="98.5" height="94.3" fill="#1b1b1b"/>
<rect x="1975.3" y="354.3" width="50.3" height="39.8" fill="#121212"/>
<rect x="1943.9" y="410.9" width="102.7" height="17.6" fill="#000"/>
<rect x="2069.7" y="331.3" width="43.2" height="10.9" fill="#b8b8b8" rx="4"/>
<rect x="2076.0" y="343.9" width="35.6" height="37.7" fill="#555"/>
<rect x="2076.0" y="381.6" width="35.6" height="12.6" fill="#b0b0b0" rx="4"/>
<rect x="2076.0" y="394.2" width="35.6" height="27.3" fill="#000"/>
<rect x="1918.7" y="440.3" width="264.1" height="9.2" fill="#a8a8a8" rx="3"/>
<rect x="2174.5" y="440.3" width="9.2" height="88.0" fill="#a0a0a0" rx="3"/>
<rect x="2175.9" y="527.2" width="7.7" height="260.2" fill="#4a4a4a"/>
<rect x="2175.9" y="760.0" width="7.7" height="233.4" fill="#555"/>
<rect x="2275.4" y="316.8" width="44.0" height="10.3" fill="#b0b0b0" rx="4"/>
<rect x="2275.4" y="316.8" width="12.2" height="27.6" fill="#b0b0b0" rx="4"/>
<rect x="2390.2" y="313.7" width="23.7" height="8.8" fill="#9a9a9a" rx="4"/>
<rect x="2369.2" y="328.3" width="44.8" height="5.7" fill="#777" rx="3"/>
<rect x="2300.3" y="335.9" width="113.6" height="76.5" fill="#252525"/>
<rect x="2292.6" y="332.1" width="7.7" height="84.2" fill="#3a3a3a"/>
<rect x="2300.3" y="412.5" width="113.6" height="24.9" fill="#000"/>
<rect x="2233.3" y="353.1" width="19.9" height="23.0" fill="#4c4c4c" rx="4"/>
<rect x="2234.5" y="353.9" width="17.6" height="6.9" fill="#a8a8a8" rx="4"/>
<rect x="2262.0" y="353.1" width="18.0" height="21.8" fill="#4c4c4c" rx="4"/>
<rect x="2263.2" y="353.9" width="15.7" height="6.9" fill="#a8a8a8" rx="4"/>
<rect x="2233.3" y="389.5" width="19.9" height="19.9" fill="#4c4c4c" rx="4"/>
<rect x="2234.5" y="390.3" width="17.6" height="6.9" fill="#a8a8a8" rx="4"/>
<rect x="2262.0" y="389.5" width="18.0" height="18.0" fill="#4c4c4c" rx="4"/>
<rect x="2263.2" y="390.3" width="15.7" height="6.9" fill="#a8a8a8" rx="4"/>
<polygon points="2197.0,416.3 2252.5,416.3 2225.7,438.5" fill="#9a9a9a"/>
<rect x="2215.0" y="439.2" width="34.4" height="9.6" fill="#9c9c9c" rx="5"/>
<rect x="2254.4" y="435.4" width="18.0" height="14.2" fill="#b0b0b0" rx="3"/>
<rect x="2281.1" y="435.4" width="19.9" height="14.2" fill="#b0b0b0" rx="3"/>
<rect x="2275.4" y="418.2" width="25.6" height="10.3" fill="#a0a0a0" rx="4"/>
<rect x="2227.6" y="450.7" width="109.1" height="88.0" fill="#232323"/>
<rect x="2227.6" y="538.7" width="109.1" height="23.7" fill="#000"/>
<rect x="2204.6" y="451.9" width="21.8" height="16.8" fill="#b4b4b4" rx="7"/>
<rect x="2204.6" y="472.9" width="21.8" height="16.8" fill="#b4b4b4" rx="7"/>
<rect x="2204.6" y="495.9" width="21.8" height="16.8" fill="#b4b4b4" rx="7"/>
<rect x="2204.6" y="518.8" width="21.8" height="16.8" fill="#b4b4b4" rx="7"/>
<rect x="2336.6" y="453.0" width="15.3" height="10.7" fill="#7c7c7c" rx="4"/>
<rect x="2336.6" y="474.1" width="15.3" height="10.7" fill="#7c7c7c" rx="4"/>
<rect x="2336.6" y="495.1" width="15.3" height="10.7" fill="#7c7c7c" rx="4"/>
<rect x="2336.6" y="516.2" width="15.3" height="10.7" fill="#7c7c7c" rx="4"/>
<rect x="2336.6" y="535.3" width="15.3" height="10.7" fill="#7c7c7c" rx="4"/>
<rect x="2363.4" y="435.4" width="36.4" height="46.7" fill="#5c5c5c" rx="4"/>
<rect x="2363.4" y="435.4" width="36.4" height="9.9" fill="#a8a8a8" rx="4"/>
<rect x="2363.4" y="472.9" width="36.4" height="9.2" fill="#989898" rx="4"/>
<rect x="2363.4" y="513.9" width="36.4" height="46.7" fill="#5c5c5c" rx="4"/>
<rect x="2363.4" y="513.9" width="36.4" height="9.9" fill="#a8a8a8" rx="4"/>
<rect x="2363.4" y="551.4" width="36.4" height="9.2" fill="#989898" rx="4"/>
<rect x="2363.4" y="483.2" width="36.4" height="28.7" fill="#050505"/>
<rect x="2363.4" y="560.5" width="36.4" height="24.1" fill="#050505"/>
<rect x="2401.7" y="483.2" width="12.2" height="21.8" fill="#aaa" rx="3"/>
<rect x="2401.7" y="567.4" width="12.2" height="19.9" fill="#aaa" rx="3"/>
<rect x="2214.2" y="550.2" width="27.6" height="8.4" fill="#707070" rx="4"/>
<rect x="2212.3" y="573.2" width="29.5" height="16.1" fill="#6c6c6c" rx="4"/>
<rect x="2218.0" y="575.1" width="21.0" height="5.7" fill="#a0a0a0" rx="3"/>
<rect x="2252.5" y="567.4" width="35.2" height="9.6" fill="#a8a8a8" rx="4"/>
<rect x="2340.5" y="567.4" width="25.6" height="8.4" fill="#8c8c8c" rx="4"/>
<rect x="2336.6" y="580.8" width="31.4" height="5.4" fill="#b4b4b4" rx="3"/>
<rect x="2176.7" y="530.3" width="14.5" height="9.2" fill="#2c2c2c" rx="5"/>
<rect x="2176.7" y="549.4" width="14.5" height="9.2" fill="#2c2c2c" rx="5"/>
<rect x="2176.7" y="568.6" width="14.5" height="9.2" fill="#2c2c2c" rx="5"/>
<rect x="2258.2" y="582.7" width="126.3" height="89.9" fill="#3c3c3c"/>
<rect x="2265.8" y="589.2" width="118.6" height="74.6" fill="#252525"/>
<rect x="2262.0" y="663.9" width="122.5" height="28.7" fill="#000"/>
<rect x="2243.6" y="613.3" width="15.3" height="60.1" fill="#a8a8a8" rx="6"/>
<rect x="2390.2" y="590.4" width="18.0" height="35.2" fill="#959595" rx="5"/>
<rect x="2397.9" y="634.4" width="16.1" height="16.1" fill="#808080" rx="4"/>
<rect x="2384.5" y="661.2" width="21.8" height="14.2" fill="#b0b0b0" rx="5"/>
<rect x="2187.4" y="600.0" width="29.8" height="15.3" fill="#555" rx="6"/>
<rect x="2192.0" y="603.0" width="20.3" height="8.4" fill="#c0c0c0" rx="5"/>
<rect x="2187.4" y="624.8" width="29.8" height="14.2" fill="#555" rx="6"/>
<rect x="2192.0" y="627.9" width="20.3" height="7.3" fill="#c0c0c0" rx="5"/>
<rect x="2187.4" y="651.6" width="29.8" height="15.3" fill="#555" rx="6"/>
<rect x="2192.0" y="654.7" width="20.3" height="8.4" fill="#c0c0c0" rx="5"/>
<rect x="2187.4" y="674.6" width="29.8" height="14.2" fill="#555" rx="6"/>
<rect x="2192.0" y="677.6" width="20.3" height="7.3" fill="#c0c0c0" rx="5"/>
<rect x="2208.4" y="707.1" width="27.6" height="15.3" fill="#555" rx="6"/>
<rect x="2213.0" y="710.2" width="18.4" height="8.4" fill="#c8c8c8" rx="5"/>
<rect x="2208.4" y="730.1" width="27.6" height="17.2" fill="#555" rx="6"/>
<rect x="2213.0" y="733.1" width="18.4" height="10.3" fill="#c8c8c8" rx="5"/>
<ellipse cx="2262.0" cy="735.8" rx="9" ry="6" fill="none" stroke="#2e2e2e" stroke-width="3"/>
<ellipse cx="2254.4" cy="684.1" rx="7" ry="9" fill="none" stroke="#2e2e2e" stroke-width="3"/>
<rect x="2283.1" y="705.2" width="32.5" height="16.1" fill="#484848" rx="4"/>
<rect x="2287.7" y="710.5" width="22.2" height="5.4" fill="#c4c4c4" rx="3"/>
<rect x="2283.1" y="728.1" width="32.5" height="16.1" fill="#484848" rx="4"/>
<rect x="2287.7" y="733.5" width="22.2" height="5.4" fill="#c4c4c4" rx="3"/>
<rect x="2317.5" y="705.2" width="32.5" height="16.1" fill="#484848" rx="4"/>
<rect x="2322.1" y="710.5" width="22.2" height="5.4" fill="#c4c4c4" rx="3"/>
<rect x="2317.5" y="728.1" width="32.5" height="16.1" fill="#484848" rx="4"/>
<rect x="2322.1" y="733.5" width="22.2" height="5.4" fill="#c4c4c4" rx="3"/>
<rect x="2359.6" y="705.2" width="32.5" height="16.1" fill="#484848" rx="4"/>
<rect x="2364.2" y="710.5" width="22.2" height="5.4" fill="#c4c4c4" rx="3"/>
<rect x="2359.6" y="728.1" width="32.5" height="16.1" fill="#484848" rx="4"/>
<rect x="2364.2" y="733.5" width="22.2" height="5.4" fill="#c4c4c4" rx="3"/>
<rect x="2394.0" y="705.2" width="19.9" height="16.1" fill="#484848" rx="4"/>
<rect x="2398.6" y="710.5" width="15.3" height="5.4" fill="#c4c4c4" rx="3"/>
<rect x="2394.0" y="728.1" width="19.9" height="16.1" fill="#484848" rx="4"/>
<rect x="2398.6" y="733.5" width="15.3" height="5.4" fill="#c4c4c4" rx="3"/>
<rect x="2187.4" y="762.6" width="29.8" height="16.1" fill="#555" rx="6"/>
<rect x="2192.0" y="766.4" width="20.3" height="6.5" fill="#c0c0c0" rx="5"/>
<rect x="2187.4" y="760.0" width="29.8" height="11.5" fill="#555" rx="5"/>
<rect x="2191.2" y="769.6" width="21.0" height="5.7" fill="#bbb" rx="4"/>
<rect x="2187.4" y="783.0" width="24.9" height="9.6" fill="#999" rx="5"/>
<g filter="url(#mb2)"><text x="2196" y="860" font-family="Liberation Sans" font-size="68" font-weight="bold" fill="#b0b0b0" textLength="140" lengthAdjust="spacingAndGlyphs">750</text><text x="2348" y="811" font-family="Liberation Sans" font-size="68" font-weight="bold" fill="#a8a8a8" textLength="104" lengthAdjust="spacingAndGlyphs">30</text></g>
<rect x="2338.5" y="830.8" width="46.7" height="8.4" fill="#a4a4a4" rx="4"/>
<rect x="2269.7" y="872.9" width="52.4" height="21.8" fill="#4c4c4c" rx="8"/>
<rect x="2281.1" y="876.7" width="17.2" height="11.5" fill="#999" rx="4"/>
<rect x="2304.1" y="876.7" width="14.2" height="11.5" fill="#999" rx="4"/>
<ellipse cx="2281.1" cy="913.1" rx="9" ry="7" fill="none" stroke="#2c2c2c" stroke-width="3"/>
<ellipse cx="2361.5" cy="879.4" rx="9" ry="7" fill="none" stroke="#2c2c2c" stroke-width="3"/>
<rect x="2388.3" y="838.4" width="25.6" height="19.9" fill="#555" rx="6"/>
<rect x="2394.0" y="842.3" width="19.9" height="9.6" fill="#8c8c8c" rx="4"/>
<rect x="2388.3" y="867.1" width="25.6" height="19.9" fill="#555" rx="6"/>
<rect x="2394.0" y="871.0" width="19.9" height="9.6" fill="#8c8c8c" rx="4"/>
<rect x="2202.7" y="922.6" width="52.4" height="21.8" fill="#4a4a4a" rx="8"/>
<rect x="2212.3" y="927.6" width="32.5" height="12.2" fill="#b8b8b8" rx="6"/>
<rect x="2202.7" y="951.3" width="52.4" height="23.7" fill="#3c3c3c" rx="6"/>
<rect x="2204.6" y="953.2" width="19.1" height="9.6" fill="#b0b0b0" rx="4"/>
<rect x="2231.4" y="953.2" width="20.3" height="9.6" fill="#b0b0b0" rx="4"/>
<rect x="2202.7" y="981.9" width="52.4" height="23.7" fill="#3c3c3c" rx="6"/>
<rect x="2204.6" y="983.9" width="19.1" height="9.6" fill="#b0b0b0" rx="4"/>
<rect x="2231.4" y="983.9" width="20.3" height="9.6" fill="#b0b0b0" rx="4"/>
<rect x="2298.4" y="939.8" width="109.1" height="89.9" fill="#303030"/>
<rect x="2298.4" y="1029.8" width="109.1" height="21.8" fill="#000"/>
<rect x="2296.5" y="926.5" width="19.9" height="14.2" fill="#bcbcbc" rx="3"/>
<rect x="2325.2" y="926.5" width="19.9" height="14.2" fill="#bcbcbc" rx="3"/>
<rect x="2353.1" y="926.5" width="19.9" height="14.2" fill="#bcbcbc" rx="3"/>
<rect x="2380.6" y="926.5" width="19.9" height="14.2" fill="#bcbcbc" rx="3"/>
<rect x="2407.4" y="930.3" width="6.5" height="28.7" fill="#999" rx="3"/>
<rect x="2281.1" y="930.3" width="16.1" height="31.4" fill="#b0b0b0" rx="4"/>
<rect x="2277.3" y="966.6" width="21.8" height="16.1" fill="#b0b0b0" rx="6"/>
<rect x="2277.3" y="987.7" width="21.8" height="18.0" fill="#b0b0b0" rx="6"/>
<rect x="2281.1" y="1010.6" width="16.1" height="27.6" fill="#b0b0b0" rx="4"/>
<rect x="2408.2" y="966.6" width="5.7" height="38.3" fill="#444"/>
<rect x="2275.4" y="1054.6" width="35.2" height="8.4" fill="#9c9c9c" rx="4"/>
<rect x="2298.4" y="1062.3" width="19.9" height="150.0" fill="#9c9c9c" rx="4"/>
<rect x="2275.4" y="1205.8" width="42.9" height="8.4" fill="#9c9c9c" rx="4"/>
<rect x="2298.4" y="1100.6" width="31.4" height="8.4" fill="#9c9c9c" rx="4"/>
<rect x="2309.8" y="1060.4" width="104.1" height="37.1" fill="#4a4a4a" rx="6"/>
<rect x="2332.8" y="1064.2" width="62.0" height="27.6" fill="#6c6c6c" rx="5"/>
<rect x="2332.8" y="1097.5" width="62.0" height="23.0" fill="#000"/>
<rect x="2394.0" y="1098.7" width="19.9" height="7.7" fill="#999" rx="3"/>
<rect x="2327.1" y="1129.3" width="29.5" height="42.9" fill="#484848" rx="8"/>
<rect x="2332.8" y="1136.9" width="19.1" height="6.9" fill="#c8c8c8" rx="4"/>
<rect x="2332.8" y="1158.0" width="19.1" height="6.9" fill="#c8c8c8" rx="4"/>
<rect x="2174.0" y="1058.5" width="19.9" height="35.2" fill="#777" rx="4"/>
<rect x="2175.2" y="1059.6" width="17.6" height="8.4" fill="#b8b8b8" rx="3"/>
<rect x="2178.6" y="1080.7" width="10.7" height="7.7" fill="#c8c8c8" rx="4"/>
<rect x="2197.0" y="1058.5" width="19.9" height="35.2" fill="#777" rx="4"/>
<rect x="2198.1" y="1059.6" width="17.6" height="8.4" fill="#b8b8b8" rx="3"/>
<rect x="2201.6" y="1080.7" width="10.7" height="7.7" fill="#c8c8c8" rx="4"/>
<rect x="2219.9" y="1058.5" width="18.0" height="35.2" fill="#777" rx="4"/>
<rect x="2221.1" y="1059.6" width="15.7" height="8.4" fill="#b8b8b8" rx="3"/>
<rect x="2224.5" y="1080.7" width="8.8" height="7.7" fill="#c8c8c8" rx="4"/>
<rect x="2241.0" y="1058.5" width="25.6" height="35.2" fill="#777" rx="4"/>
<rect x="2242.1" y="1059.6" width="23.3" height="8.4" fill="#b8b8b8" rx="3"/>
<rect x="2245.6" y="1080.7" width="16.5" height="7.7" fill="#c8c8c8" rx="4"/>
<polygon points="1445.0,1072.0 1757.0,1066.0 1757.0,1236.0 1445.0,1236.0" fill="#151515"/>
<rect x="1449.8" y="1122.0" width="33.6" height="74.2" fill="#3e3e3e" rx="5"/>
<path d="M1466.4 1191.8 Q1471.6 1226.7 1515.2 1227.6 L1598.1 1227.6" fill="none" stroke="#3a3a3a" stroke-width="22" stroke-linecap="round"/>
<circle cx="1545.8" cy="1163.5" r="50" fill="#0a0a0a"/><circle cx="1545.8" cy="1163.5" r="26" fill="#1e1e1e" stroke="#2a2a2a" stroke-width="3"/>
<rect x="1536.2" y="1081.9" width="26.2" height="17.4" fill="#555" rx="5"/>
<rect x="1540.5" y="1085.0" width="17.4" height="7.4" fill="#d0d0d0" rx="3"/>
<polygon points="1681.0,1078.4 1712.4,1100.2 1712.4,1146.0 1668.8,1113.3" fill="#c0c0c0"/>
<polygon points="1602.5,1116.8 1667.9,1114.2 1710.2,1148.2 1640.8,1150.0" fill="#c0c0c0"/>
<polygon points="1641.7,1154.7 1711.5,1151.3 1670.9,1189.6 1604.6,1191.0" fill="#c0c0c0"/>
<polygon points="1713.7,1152.6 1713.7,1204.9 1677.5,1233.3 1668.8,1192.7" fill="#c0c0c0"/>
<path d="M1727.6 1080.6 L1722.8 1189.6 Q1728.9 1209.3 1757.3 1218.0" fill="none" stroke="#b0b0b0" stroke-width="10" stroke-linecap="round"/>
<line x1="1772.6" y1="1218.0" x2="2274.2" y2="1216.3" stroke="#7a7a7a" stroke-width="5" stroke-dasharray="22 10"/>
<ellipse cx="1788.7" cy="1090.2" rx="7" ry="11" fill="#343434"/><ellipse cx="1788.7" cy="1090.2" rx="3.600" ry="4" fill="#a0a0a0"/>
<rect x="1782.6" y="1105.5" width="13.1" height="5.2" fill="#a8a8a8" rx="3"/>
<ellipse cx="1810.7" cy="1090.2" rx="7" ry="11" fill="#343434"/><ellipse cx="1810.7" cy="1090.2" rx="3.600" ry="4" fill="#a0a0a0"/>
<rect x="1804.6" y="1105.5" width="13.1" height="5.2" fill="#a8a8a8" rx="3"/>
<ellipse cx="1832.8" cy="1090.2" rx="7" ry="11" fill="#343434"/><ellipse cx="1832.8" cy="1090.2" rx="3.600" ry="4" fill="#a0a0a0"/>
<rect x="1826.7" y="1105.5" width="13.1" height="5.2" fill="#a8a8a8" rx="3"/>
<ellipse cx="1854.8" cy="1090.2" rx="7" ry="11" fill="#343434"/><ellipse cx="1854.8" cy="1090.2" rx="3.600" ry="4" fill="#a0a0a0"/>
<rect x="1848.7" y="1105.5" width="13.1" height="5.2" fill="#a8a8a8" rx="3"/>
<ellipse cx="1876.8" cy="1090.2" rx="7" ry="11" fill="#343434"/><ellipse cx="1876.8" cy="1090.2" rx="3.600" ry="4" fill="#a0a0a0"/>
<rect x="1870.7" y="1105.5" width="13.1" height="5.2" fill="#a8a8a8" rx="3"/>
<ellipse cx="1898.8" cy="1090.2" rx="7" ry="11" fill="#343434"/><ellipse cx="1898.8" cy="1090.2" rx="3.600" ry="4" fill="#a0a0a0"/>
<rect x="1892.7" y="1105.5" width="13.1" height="5.2" fill="#a8a8a8" rx="3"/>
<ellipse cx="1920.9" cy="1090.2" rx="7" ry="11" fill="#343434"/><ellipse cx="1920.9" cy="1090.2" rx="3.600" ry="4" fill="#a0a0a0"/>
<rect x="1914.8" y="1105.5" width="13.1" height="5.2" fill="#a8a8a8" rx="3"/>
<ellipse cx="1942.9" cy="1090.2" rx="7" ry="11" fill="#343434"/><ellipse cx="1942.9" cy="1090.2" rx="3.600" ry="4" fill="#a0a0a0"/>
<rect x="1936.8" y="1105.5" width="13.1" height="5.2" fill="#a8a8a8" rx="3"/>
<ellipse cx="1964.9" cy="1090.2" rx="7" ry="11" fill="#343434"/><ellipse cx="1964.9" cy="1090.2" rx="3.600" ry="4" fill="#a0a0a0"/>
<rect x="1958.8" y="1105.5" width="13.1" height="5.2" fill="#a8a8a8" rx="3"/>
<ellipse cx="1987.0" cy="1090.2" rx="7" ry="11" fill="#343434"/><ellipse cx="1987.0" cy="1090.2" rx="3.600" ry="4" fill="#a0a0a0"/>
<rect x="1980.8" y="1105.5" width="13.1" height="5.2" fill="#a8a8a8" rx="3"/>
<ellipse cx="2009.0" cy="1090.2" rx="7" ry="11" fill="#343434"/><ellipse cx="2009.0" cy="1090.2" rx="3.600" ry="4" fill="#a0a0a0"/>
<rect x="2002.9" y="1105.5" width="13.1" height="5.2" fill="#a8a8a8" rx="3"/>
<ellipse cx="2031.0" cy="1090.2" rx="7" ry="11" fill="#343434"/><ellipse cx="2031.0" cy="1090.2" rx="3.600" ry="4" fill="#a0a0a0"/>
<rect x="2024.9" y="1105.5" width="13.1" height="5.2" fill="#a8a8a8" rx="3"/>
<ellipse cx="2053.0" cy="1090.2" rx="7" ry="11" fill="#343434"/><ellipse cx="2053.0" cy="1090.2" rx="3.600" ry="4" fill="#a0a0a0"/>
<rect x="2046.9" y="1105.5" width="13.1" height="5.2" fill="#a8a8a8" rx="3"/>
<ellipse cx="2075.1" cy="1090.2" rx="7" ry="11" fill="#343434"/><ellipse cx="2075.1" cy="1090.2" rx="3.600" ry="4" fill="#a0a0a0"/>
<rect x="2069.0" y="1105.5" width="13.1" height="5.2" fill="#a8a8a8" rx="3"/>
<ellipse cx="2097.1" cy="1090.2" rx="7" ry="11" fill="#343434"/><ellipse cx="2097.1" cy="1090.2" rx="3.600" ry="4" fill="#a0a0a0"/>
<rect x="2091.0" y="1105.5" width="13.1" height="5.2" fill="#a8a8a8" rx="3"/>
<ellipse cx="2119.1" cy="1090.2" rx="7" ry="11" fill="#343434"/><ellipse cx="2119.1" cy="1090.2" rx="3.600" ry="4" fill="#a0a0a0"/>
<rect x="2113.0" y="1105.5" width="13.1" height="5.2" fill="#a8a8a8" rx="3"/>
<ellipse cx="2141.1" cy="1090.2" rx="7" ry="11" fill="#343434"/><ellipse cx="2141.1" cy="1090.2" rx="3.600" ry="4" fill="#a0a0a0"/>
<rect x="2135.0" y="1105.5" width="13.1" height="5.2" fill="#a8a8a8" rx="3"/>
<ellipse cx="2163.2" cy="1090.2" rx="7" ry="11" fill="#343434"/><ellipse cx="2163.2" cy="1090.2" rx="3.600" ry="4" fill="#a0a0a0"/>
<rect x="2157.1" y="1105.5" width="13.1" height="5.2" fill="#a8a8a8" rx="3"/>
<ellipse cx="2185.2" cy="1090.2" rx="7" ry="11" fill="#343434"/><ellipse cx="2185.2" cy="1090.2" rx="3.600" ry="4" fill="#a0a0a0"/>
<rect x="2179.1" y="1105.5" width="13.1" height="5.2" fill="#a8a8a8" rx="3"/>
<ellipse cx="2207.2" cy="1090.2" rx="7" ry="11" fill="#343434"/><ellipse cx="2207.2" cy="1090.2" rx="3.600" ry="4" fill="#a0a0a0"/>
<rect x="2201.1" y="1105.5" width="13.1" height="5.2" fill="#a8a8a8" rx="3"/>
<ellipse cx="2229.3" cy="1090.2" rx="7" ry="11" fill="#343434"/><ellipse cx="2229.3" cy="1090.2" rx="3.600" ry="4" fill="#a0a0a0"/>
<rect x="2223.1" y="1105.5" width="13.1" height="5.2" fill="#a8a8a8" rx="3"/>
<ellipse cx="2251.3" cy="1090.2" rx="7" ry="11" fill="#343434"/><ellipse cx="2251.3" cy="1090.2" rx="3.600" ry="4" fill="#a0a0a0"/>
<rect x="2245.2" y="1105.5" width="13.1" height="5.2" fill="#a8a8a8" rx="3"/>
<ellipse cx="2273.3" cy="1090.2" rx="7" ry="11" fill="#343434"/><ellipse cx="2273.3" cy="1090.2" rx="3.600" ry="4" fill="#a0a0a0"/>
<rect x="2267.2" y="1105.5" width="13.1" height="5.2" fill="#a8a8a8" rx="3"/>
<rect x="1757.3" y="1104.6" width="527.8" height="67.6" fill="#2a2a2a" rx="3"/>
<rect x="1781.3" y="1114.2" width="475.4" height="52.3" fill="#000"/>
<rect x="1792.2" y="1140.4" width="460.2" height="21.8" fill="#2d2d2d"/>
<rect x="1835.8" y="1135.1" width="85.1" height="11.8" fill="#050505"/>
<rect x="2117.2" y="1130.8" width="85.1" height="14.0" fill="#050505"/>
<rect x="1835.8" y="1132.9" width="85.1" height="3.5" fill="#555"/>
<rect x="2117.2" y="1129.0" width="85.1" height="3.5" fill="#555"/>
<rect x="1776.9" y="1166.5" width="490.7" height="5.2" fill="#b0b0b0" rx="3"/>
<rect x="1755.1" y="1172.6" width="531.3" height="41.0" fill="#000"/>
<rect x="1759.5" y="1122.0" width="19.6" height="41.4" fill="#3a3a3a"/>
<rect x="2258.9" y="1108.9" width="24.0" height="56.7" fill="#333"/>
</g>
<g clip-path="url(#nclip)"><rect x="1440" y="300" width="974" height="940" filter="url(#noise)" opacity="0.17"/></g>
<g filter="url(#mb)"><polygon points="1441.0,1040.0 2174.0,1029.0 2174.0,1059.0 1445.0,1071.0" fill="#000"/>
<rect x="1781.3" y="1114.2" width="475.4" height="25.3" fill="#000"/>
<rect x="1755.1" y="1173.5" width="531.3" height="40.1" fill="#000"/>
<rect x="1835.8" y="1136.0" width="85.1" height="10.9" fill="#030303"/>
<rect x="2117.2" y="1131.6" width="85.1" height="13.1" fill="#030303"/>
<rect x="1820.2" y="430.6" width="98.5" height="20.1" fill="#000"/>
<rect x="1943.9" y="411.8" width="102.7" height="15.9" fill="#000"/>
<rect x="2300.3" y="413.2" width="113.6" height="23.3" fill="#000"/>
<rect x="2227.6" y="539.5" width="109.1" height="22.2" fill="#000"/>
<rect x="2262.0" y="664.6" width="122.5" height="27.2" fill="#000"/>
<rect x="2298.4" y="1030.5" width="109.1" height="20.3" fill="#000"/>
<rect x="2332.8" y="1098.3" width="62.0" height="21.4" fill="#000"/></g>
<!-- overlays -->
<g fill="none" stroke="#2cae2c" stroke-width="1.4"><rect x="2184.3" y="799" width="155" height="69.3"/><path d="M2331 795 L2339 799 L2331 803 M2180.5 860 L2184.3 868 L2188 860"/></g>
<rect x="2209.6" y="775.3" width="14.6" height="31" fill="#0a5c0a"/><rect x="2262" y="775.3" width="14.4" height="31" fill="#0a5c0a"/><rect x="2311.8" y="772.6" width="15.2" height="31.4" fill="#0a5c0a"/>
<g font-family="Liberation Mono" font-size="26" fill="#fff" text-anchor="middle"><text x="2217" y="801">7</text><text x="2269" y="801">5</text><text x="2319.5" y="799">0</text></g>
<rect x="2153.7" y="888.2" width="74.6" height="37.5" fill="#ffff00"/>
<text x="2191" y="915.5" font-family="Liberation Mono" font-size="25" fill="#000" text-anchor="middle" textLength="69" lengthAdjust="spacingAndGlyphs">rectA</text>
</g>
</svg><!--MONO_END-->
<!-- scrollbars of sub window 2 -->
<div class="a" style="left:2414px;top:270px;width:29px;height:975px;background:#fdfdfd;border:1px solid #d0d0d0"></div>
<div class="a" style="left:2415px;top:298px;width:27px;height:285px;background:linear-gradient(90deg,#e6e6e6,#f0f0f0);border:1px solid #c8c8c8"></div>
<div class="a" style="left:2415px;top:1031px;width:27px;height:185px;background:linear-gradient(90deg,#e6e6e6,#f0f0f0);border:1px solid #c8c8c8"></div>
<svg class="a" style="left:2414px;top:270px" width="29" height="975"><path d="M7 19 L22 19 L14.5 10 Z" fill="#5a5a5a"/><path d="M7 957 L22 957 L14.5 966 Z" fill="#5a5a5a"/></svg>
<div class="a" style="left:1396px;top:1245px;width:1047px;height:29px;background:#fdfdfd;border:1px solid #c4c4c4"></div>
<div class="a" style="left:1424px;top:1246px;width:205px;height:27px;background:linear-gradient(#e4e4e4,#eeeeee);border:1px solid #c8c8c8"></div>
<div class="a" style="left:2226px;top:1246px;width:160px;height:27px;background:linear-gradient(#e4e4e4,#eeeeee);border:1px solid #c8c8c8"></div>
<div class="a" style="left:2414px;top:1246px;width:1px;height:27px;background:#c8c8c8"></div>
<svg class="a" style="left:1396px;top:1245px" width="1047" height="29"><path d="M19 7 L19 22 L10 14.5 Z" fill="#5a5a5a"/><path d="M999 7 L999 22 L1008 14.5 Z" fill="#5a5a5a"/></svg>
<div class="a" style="left:2156px;top:1279px;width:222px;height:28px;border:2px solid #c6c6c6;border-right-color:#e0e0e0;border-bottom-color:#e0e0e0;border-top-color:#b4b4b4;border-left-color:#b4b4b4"></div>
<div class="a" style="left:2384px;top:1279px;width:59px;height:28px;border:2px solid #c6c6c6;border-right-color:#e0e0e0;border-bottom-color:#e0e0e0;border-top-color:#b4b4b4;border-left-color:#b4b4b4"></div>
<div class="t" id="w2c" style="left:2162.0px;top:1285.0px;white-space:pre;font-size:22px;transform:scaleX(1.0061);transform-origin:0 0">637.50 1725.00  v:29</div>
<div class="t" id="w2z" style="left:2390.3px;top:1285.0px;font-size:22px;transform:scaleX(0.9989);transform-origin:0 0">40%</div>

<!-- ===== right dock : Program ===== -->
<div class="t" id="rp1" style="left:2486.0px;top:162.6px;font-size:21.3px;transform:scaleX(0.9979);transform-origin:0 0">Program</div>
<div class="btn" style="left:3122px;top:154px;width:36px;height:36px"></div>
<div class="btn" style="left:3161px;top:154px;width:40px;height:36px;background:#fafafa"></div>
<svg class="a" style="left:3122px;top:154px" width="70" height="36"><path d="M11 14 L18 21 L25 14" fill="none" stroke="#222" stroke-width="3.5"/><path d="M47 9 L65 27 M65 9 L47 27" stroke="#222" stroke-width="3.5"/></svg>
<!--PROGTOOLBAR-->
<div class="a" style="left:2470px;top:258px;width:730px;height:866px;background:#fff;border:1px solid #a0a0a0;box-shadow:inset 3px 3px 0 #fff, inset 4px 4px 0 #8c8c8c"></div><div class="a" style="left:2474px;top:1119px;width:720px;height:2px;background:#d8d8d8"></div>
<div class="a" style="left:2516px;top:303.500px;width:680px;height:39px;background:#d9d9d9"></div>
<!--TREE_B--><svg class="a" style="left:2474px;top:262px" width="130" height="600" viewBox="2474 262 130 600">
<path d="M2495.700 303 V342 M2495.700 321.500 H2516" stroke="#d2d2d2" stroke-width="3.200" fill="none"/>
<path d="M2495.900 382 V661.500" stroke="#9a9a9a" stroke-width="1.800" fill="none"/>
<path d="M2536.200 382 V626" stroke="#d2d2d2" stroke-width="3.200" fill="none"/>
<path d="M2536.200 401.500 H2556 M2536.200 441.800 H2556 M2536.200 481.700 H2556 M2536.200 521.600 H2556 M2536.200 561.500 H2556 M2536.200 601.500 H2556" stroke="#d2d2d2" stroke-width="3.600" fill="none"/>
<path d="M2536.200 626 V641.400 H2555.500" stroke="#9a9a9a" stroke-width="1.600" fill="none"/>
<g transform="translate(2484.500 269.300) scale(0.860)"><use href="#tree" width="32" height="32"/></g>
<circle cx="2539.100" cy="322.100" r="6.300" fill="#2f96ea" stroke="#62b4f2" stroke-width="1.800"/>
<rect x="2487.200" y="354.200" width="17.600" height="17.600" fill="#fff" stroke="#a8a8a8" stroke-width="1.800"/><path d="M2490.800 363 H2501.200" stroke="#8a8a8a" stroke-width="3"/>
<ellipse cx="2538.300" cy="363.300" rx="15" ry="13" fill="#16488e"/><ellipse cx="2538.300" cy="362.300" rx="12" ry="9.500" fill="#1a5aa8"/><ellipse cx="2538.300" cy="363.800" rx="6" ry="3.300" fill="#fff"/>
<rect x="2487.200" y="673.9" width="17.600" height="18" fill="#fff" stroke="#b4b4b4" stroke-width="1.800"/><path d="M2490.800 682.9 H2501.200 M2496 677.7 V688.1" stroke="#b0b0b0" stroke-width="3.200"/>
<rect x="2487.200" y="713.9" width="17.600" height="18" fill="#fff" stroke="#b4b4b4" stroke-width="1.800"/><path d="M2490.800 722.9 H2501.200 M2496 717.7 V728.1" stroke="#b0b0b0" stroke-width="3.200"/>
<rect x="2487.200" y="753.9" width="17.600" height="18" fill="#fff" stroke="#b4b4b4" stroke-width="1.800"/><path d="M2490.800 762.9 H2501.200 M2496 757.7 V768.1" stroke="#b0b0b0" stroke-width="3.200"/>
<rect x="2487.200" y="793.9" width="17.600" height="18" fill="#fff" stroke="#b4b4b4" stroke-width="1.800"/><path d="M2490.800 802.9 H2501.200 M2496 797.7 V808.1" stroke="#b0b0b0" stroke-width="3.200"/>
<rect x="2487.200" y="833.9" width="17.600" height="18" fill="#fff" stroke="#b4b4b4" stroke-width="1.800"/><path d="M2490.800 842.9 H2501.200 M2496 837.7 V848.1" stroke="#b0b0b0" stroke-width="3.200"/>
<text x="2565.500" y="411.7" font-family="Liberation Sans" font-weight="bold" font-size="21" fill="#1430b4" textLength="25" lengthAdjust="spacingAndGlyphs">Hdl</text>
<path d="M2562 400.4 L2572.500 392.9 V401.9 H2562 Z" fill="#e81018"/>
<text x="2565.500" y="451.3" font-family="Liberation Sans" font-weight="bold" font-size="21" fill="#1430b4" textLength="25" lengthAdjust="spacingAndGlyphs">Hdl</text>
<path d="M2583.800 427.4 H2593.700 V437.0 Z" fill="#0e8018"/>
<text x="2565.500" y="491.3" font-family="Liberation Sans" font-weight="bold" font-size="21" fill="#1430b4" textLength="25" lengthAdjust="spacingAndGlyphs">Hdl</text>
<path d="M2583.800 467.4 H2593.700 V477.0 Z" fill="#0e8018"/>
<text x="2565.500" y="531.3" font-family="Liberation Sans" font-weight="bold" font-size="21" fill="#1430b4" textLength="25" lengthAdjust="spacingAndGlyphs">Hdl</text>
<path d="M2583.800 507.4 H2593.700 V517.0 Z" fill="#0e8018"/>
<text x="2569.5" y="571.2" font-family="Liberation Sans" font-weight="bold" font-size="21" fill="#3434c8">N</text>
<path d="M2583.800 547.6 H2593.700 V557.2 Z" fill="#0e8018"/>
<text x="2569.5" y="611.2" font-family="Liberation Sans" font-weight="bold" font-size="21" fill="#3434c8">N</text>
<path d="M2583.800 587.6 H2593.700 V597.2 Z" fill="#0e8018"/>
<text x="2571.0" y="651.0" font-family="Liberation Sans" font-weight="bold" font-size="21" fill="#3434c8">B</text>
<path d="M2583.800 627.4 H2593.700 V637.0 Z" fill="#0e8018"/>
<rect x="2525.200" y="670.0" width="25.600" height="25.600" fill="#e6e6fa" stroke="#2a8ee0" stroke-width="2"/><rect x="2525.200" y="670.0" width="25.600" height="4.500" fill="#56b2f0"/>
<text x="2538" y="691.0" font-family="Liberation Sans" font-weight="bold" font-size="15" fill="#111" text-anchor="middle">3D</text>
<rect x="2525.200" y="750.0" width="25.600" height="25.600" fill="#e6e6fa" stroke="#2a8ee0" stroke-width="2"/><rect x="2525.200" y="750.0" width="25.600" height="4.500" fill="#56b2f0"/>
<text x="2538" y="771.0" font-family="Liberation Sans" font-weight="bold" font-size="15" fill="#111" text-anchor="middle">3D</text>
<rect x="2525.200" y="830.0" width="25.600" height="25.600" fill="#e6e6fa" stroke="#2a8ee0" stroke-width="2"/><rect x="2525.200" y="830.0" width="25.600" height="4.500" fill="#56b2f0"/>
<text x="2538" y="851.0" font-family="Liberation Sans" font-weight="bold" font-size="14" fill="#555" text-anchor="middle">8</text>
<path d="M2532.500 715.8 L2540 723.8 L2532.500 731.8 M2537.500 715.8 L2545 723.8 L2537.500 731.8" fill="none" stroke="#8c8c8c" stroke-width="3.200"/>
<path d="M2532.500 795.8 L2540 803.8 L2532.500 811.8 M2537.500 795.8 L2545 803.8 L2537.500 811.8" fill="none" stroke="#8c8c8c" stroke-width="3.200"/>
</svg><!--TREE_E-->
<div class="t tr" id="t0" style="left:2527.5px;top:273.6px;font-size:23.5px;transform:scaleX(0.9934);transform-origin:0 0">main</div>
<div class="t tr" id="t1" style="left:2567.0px;top:313.6px;font-size:23.5px;transform:scaleX(0.9860);transform-origin:0 0">PCB - 3D Scan with Reflectance 8-bit Image - OCR</div>
<div class="t tr" id="t2" style="left:2567.0px;top:353.6px;font-size:23.5px;transform:scaleX(1.0051);transform-origin:0 0">acquire3dA</div>
<div class="t tr" id="t3" style="left:2607.4px;top:393.6px;font-size:23.5px;transform:scaleX(1.0032);transform-origin:0 0">image_source &lt;- fileB.handle</div>
<div class="t tr" id="t4" style="left:2607.4px;top:433.6px;font-size:23.5px;transform:scaleX(1.0057);transform-origin:0 0">data3d</div>
<div class="t tr" id="t5" style="left:2607.4px;top:473.6px;font-size:23.5px;transform:scaleX(0.9823);transform-origin:0 0">image_r</div>
<div class="t tr" id="t6" style="left:2607.4px;top:513.6px;font-size:23.5px;transform:scaleX(0.9782);transform-origin:0 0">image_w</div>
<div class="t tr" id="t7" style="left:2607.4px;top:553.6px;font-size:23.5px;transform:scaleX(0.9799);transform-origin:0 0">acquired_lines</div>
<div class="t tr" id="t8" style="left:2607.4px;top:593.6px;font-size:23.5px;transform:scaleX(1.0184);transform-origin:0 0">fragment_count</div>
<div class="t tr" id="t9" style="left:2607.4px;top:633.6px;font-size:23.5px;transform:scaleX(0.9760);transform-origin:0 0">status</div>
<div class="t tr" id="t10" style="left:2567.0px;top:673.6px;font-size:23.5px;transform:scaleX(0.9673);transform-origin:0 0">workspace_surfaceA</div>
<div class="t tr" id="t11" style="left:2567.0px;top:713.6px;font-size:23.5px;transform:scaleX(0.9952);transform-origin:0 0">surface_untiltA</div>
<div class="t tr" id="t12" style="left:2567.0px;top:753.6px;font-size:23.5px;transform:scaleX(0.9613);transform-origin:0 0">workspace_surfaceB</div>
<div class="t tr" id="t13" style="left:2567.0px;top:793.6px;font-size:23.5px;transform:scaleX(0.9677);transform-origin:0 0">convert_16_to_8A</div>
<div class="t tr" id="t14" style="left:2567.0px;top:833.6px;font-size:23.5px;transform:scaleX(0.9909);transform-origin:0 0">workspace_mono8A</div>
<!-- tabs -->
<div class="a" style="left:2471px;top:1122px;width:94px;height:47px;background:#fbfbfb;border:2px solid #b4b4b4;border-top:none;border-radius:0 0 6px 6px"></div>
<div class="t" id="tb0" style="left:2495.2px;top:1139.5px;font-size:21.3px;transform:scaleX(1.0006);transform-origin:0 0">main</div>
<div class="a" style="left:2603px;top:1174px;width:600px;height:2px;background:#c2c2c2"></div>
<div class="a" style="left:2604px;top:1176px;width:197px;height:40px;background:#dbdbdb;border:2px solid #bdbdbd;border-top:none;border-radius:0 0 6px 6px"></div>
<div class="a" style="left:2801px;top:1176px;width:144px;height:40px;background:#dbdbdb;border:2px solid #bdbdbd;border-top:none;border-radius:0 0 6px 6px"></div>
<div class="a" style="left:2471px;top:1174px;width:133px;height:46px;background:#f4f4f4;border:2px solid #b4b4b4;border-top:none;border-radius:0 0 6px 6px"></div>
<div class="t" id="tb1" style="left:2495.8px;top:1188.4px;font-size:21.3px;transform:scaleX(0.9869);transform-origin:0 0">Program</div>
<div class="t" id="tb2" style="left:2626.3px;top:1186.9px;font-size:21.3px;transform:scaleX(1.0025);transform-origin:0 0">System Objects</div>
<div class="t" id="tb3" style="left:2825.2px;top:1186.9px;font-size:21.3px;transform:scaleX(1.0002);transform-origin:0 0">Properties</div>
<svg class="a" style="left:2818px;top:1225px" width="40" height="5"><g fill="#b0b0b0"><rect x="2" y="1" width="2" height="2"/><rect x="8" y="1" width="2" height="2"/><rect x="14" y="1" width="2" height="2"/><rect x="20" y="1" width="2" height="2"/><rect x="26" y="1" width="2" height="2"/><rect x="32" y="1" width="2" height="2"/></g></svg>
<!-- ===== Watch ===== -->
<div class="t" id="wt" style="left:2486.5px;top:1246.6px;font-size:21.3px;transform:scaleX(1.0020);transform-origin:0 0">Watch</div>
<div class="btn" style="left:3122px;top:1237px;width:36px;height:36px"></div>
<div class="btn" style="left:3161px;top:1237px;width:40px;height:36px;background:#fafafa"></div>
<svg class="a" style="left:3122px;top:1237px" width="70" height="36"><path d="M11 14 L18 21 L25 14" fill="none" stroke="#222" stroke-width="3.5"/><path d="M47 9 L65 27 M65 9 L47 27" stroke="#222" stroke-width="3.5"/></svg>
<div class="a" style="left:2470px;top:1275px;width:730px;height:301px;background:#fff;border:1px solid #a0a0a0;border-bottom:2px solid #b4b4b4"></div>
<div class="a" style="left:2472px;top:1277px;width:724px;height:39px;background:linear-gradient(#ffffff,#f4f4f4 50%,#ebebeb);border-bottom:2px solid #a0a0a0"></div>
<div class="a" style="left:2799px;top:1277px;width:2px;height:37px;background:#d5d5d5"></div>
<div class="t" id="wh1" style="left:2477.4px;top:1287.3px;font-size:23px;transform:scaleX(1.0007);transform-origin:0 0">Name</div>
<div class="t" id="wh2" style="left:2806.8px;top:1287.3px;font-size:23px;transform:scaleX(0.9698);transform-origin:0 0">Value</div>
<div class="a" style="left:2472px;top:1316px;width:329px;height:33px;background:#e8f3fb;border:2px solid #c4dff2"></div>
<div class="a" style="left:2472px;top:1349px;width:724px;height:32px;background:#e8e8e4"></div>
<div class="a" style="left:2472px;top:1413px;width:724px;height:32px;background:#e8e8e4"></div>
<div class="t wr" id="wr1" style="left:2478.7px;top:1323.0px;font-size:23px;transform:scaleX(0.9551);transform-origin:0 0">surface_z_statsA.max_z</div>
<div class="t wr" id="wr2" style="left:2478.7px;top:1355.0px;font-size:23px;transform:scaleX(0.9645);transform-origin:0 0">surface_z_statsA.min_z</div>
<div class="t wr" id="wr3" style="left:2478.7px;top:1387.1px;font-size:23px;transform:scaleX(0.9929);transform-origin:0 0">ocr_grayscaleA.read_string</div>
<div class="t wr" id="wr4" style="left:2478.7px;top:1419.1px;font-size:23px;transform:scaleX(0.9931);transform-origin:0 0">ocr_grayscaleA.character</div>
<div class="t wr" id="wv1" style="left:2808.7px;top:1323.0px;font-size:23px;transform:scaleX(0.9807);transform-origin:0 0">419.52</div>
<div class="t wr" id="wv2" style="left:2808.7px;top:1355.0px;font-size:23px;transform:scaleX(1.0098);transform-origin:0 0">-2710.93</div>
<div class="t wr" id="wv3" style="left:2808.7px;top:1387.1px;font-size:23px;transform:scaleX(1.0007);transform-origin:0 0">750</div>
<div class="t wr" id="wv4" style="left:2808.7px;top:1419.1px;font-size:23px;transform:scaleX(1.0087);transform-origin:0 0">7 5 0</div>

<!-- ===== Monitor ===== -->
<svg class="a" style="left:1213px;top:1322px" width="40" height="5"><g fill="#b0b0b0"><rect x="2" y="1" width="2" height="2"/><rect x="8" y="1" width="2" height="2"/><rect x="14" y="1" width="2" height="2"/><rect x="20" y="1" width="2" height="2"/><rect x="26" y="1" width="2" height="2"/><rect x="32" y="1" width="2" height="2"/></g></svg>
<div class="t" id="mo" style="left:14.6px;top:1341.5px;font-size:21.6px;transform:scaleX(1.0109);transform-origin:0 0">Monitor</div>
<div class="btn" style="left:2382px;top:1334px;width:36px;height:35px"></div>
<div class="btn" style="left:2421px;top:1334px;width:36px;height:35px;background:#fafafa"></div>
<svg class="a" style="left:2382px;top:1334px" width="76" height="36"><path d="M11 14 L18 21 L25 14" fill="none" stroke="#222" stroke-width="3.5"/><path d="M48 9 L66 27 M66 9 L48 27" stroke="#222" stroke-width="3.5"/></svg>
<div class="btn" style="left:6px;top:1379px;width:48px;height:46px;background:#dcdcdc;border-color:#a0a0a0"></div>
<!--ICONMON_B--><svg class="a" style="left:14px;top:1386px" width="80" height="32"><circle cx="15.600" cy="15.500" r="10" fill="url(#iLime)"/><circle cx="66" cy="15.500" r="10.500" fill="url(#iR)"/></svg>
<svg class="a" style="left:116.0px;top:1387.0px" width="30" height="30"><use href="#filter"/></svg>
<svg class="a" style="left:165.5px;top:1387.0px" width="28" height="28"><use href="#floppy"/></svg>
<svg class="a" style="left:215.5px;top:1387.0px" width="28" height="28"><use href="#winx"/></svg><!--ICONMON_E-->
<div class="a" style="left:0;top:1436px;width:2458px;height:140px;background:#fff;border-top:2px solid #c8c8c8;border-bottom:2px solid #c8c8c8;border-right:2px solid #c8c8c8"></div>
<div class="a" style="left:2428px;top:1438px;width:28px;height:136px;background:linear-gradient(90deg,#fff 60%,#ececec);border-left:1px solid #d8d8d8"></div>
<div class="a" style="left:2429px;top:1466px;width:27px;height:28px;background:#dcdcdc;border:1px solid #c4c4c4"></div>
<div class="a" style="left:2429px;top:1464px;width:27px;height:1px;background:#c8c8c8"></div>
<div class="a" style="left:2429px;top:1547px;width:27px;height:1px;background:#c8c8c8"></div>
<svg class="a" style="left:2428px;top:1438px" width="28" height="136"><path d="M6 19 L22 19 L14 10 Z" fill="#4a4a4a"/><path d="M6 118 L22 118 L14 127 Z" fill="#4a4a4a"/></svg>
<svg class="a" style="left:10px;top:1440px" width="30" height="110"><defs><radialGradient id="gb" cx="40%" cy="35%" r="65%"><stop offset="0" stop-color="#b5e86a"/><stop offset="0.6" stop-color="#6fc22a"/><stop offset="1" stop-color="#3f8a14"/></radialGradient></defs><circle cx="13" cy="16" r="7.5" fill="url(#gb)" stroke="#4e8a22" stroke-width="1"/><circle cx="13" cy="52" r="7.5" fill="url(#gb)" stroke="#4e8a22" stroke-width="1"/><circle cx="13" cy="88" r="7.5" fill="url(#gb)" stroke="#4e8a22" stroke-width="1"/></svg>
<div class="t lg" id="l1" style="left:50.9px;top:1447.8px;white-space:pre;font-size:23.5px;transform:scaleX(0.9965);transform-origin:0 0">21:12:02.982 [main] Build time: Nov  4 2024 10:49:10 toolset: 194134120</div>
<div class="t lg" id="l2" style="left:50.9px;top:1483.7px;font-size:23.5px;transform:scaleX(0.9933);transform-origin:0 0">21:12:02.982 [main] Data dir: 'C:\ProgramData\Teledyne DALSA\Sherlock8x64'</div>
<div class="t lg" id="l3" style="left:50.9px;top:1519.7px;font-size:23.5px;transform:scaleX(1.0022);transform-origin:0 0">21:12:02.982 [main] Using locale: [ C ] decimal point symbol: [ . ]</div>
<!-- ===== status bar ===== -->
<div class="t sbx" id="sbx0" style="left:2298.4px;top:1591.2px;white-space:pre;font-size:21.5px;transform:scaleX(0.9654);transform-origin:0 0">CPU: 0% MEM USED: 3.0 GB FREE: 3.4 GB</div>
<div class="t sbx" id="sbx1" style="left:2728.9px;top:1591.2px;white-space:pre;font-size:21.5px;transform:scaleX(0.9837);transform-origin:0 0">CONFIG: default</div>
<div class="t sbx" id="sbx2" style="left:2901.3px;top:1591.2px;white-space:pre;font-size:21.5px;transform:scaleX(1.0139);transform-origin:0 0">1108.90 ms</div>

<div class="t" id="sb2" style="left:3033.4px;top:1588.5px;font-weight:bold;font-size:21.8px;transform:scaleX(1.0002);transform-origin:0 0">HALTED</div>
<svg class="a" style="left:3166px;top:1596px" width="24" height="22"><g fill="#bcbcbc"><rect x="18" y="4" width="2" height="2"/><rect x="12" y="10" width="2" height="2"/><rect x="18" y="10" width="2" height="2"/><rect x="6" y="16" width="2" height="2"/><rect x="12" y="16" width="2" height="2"/><rect x="18" y="16" width="2" height="2"/></g></svg>

<!--ICONPL_B--><svg class="a" style="left:8px;top:103px" width="12" height="34"><g fill="#bdbdbd"><rect x="1" y="0" width="2" height="2"/><rect x="1" y="6" width="2" height="2"/><rect x="1" y="12" width="2" height="2"/><rect x="1" y="18" width="2" height="2"/><rect x="1" y="24" width="2" height="2"/><rect x="1" y="30" width="2" height="2"/><rect x="7" y="0" width="2" height="2"/><rect x="7" y="6" width="2" height="2"/><rect x="7" y="12" width="2" height="2"/><rect x="7" y="18" width="2" height="2"/><rect x="7" y="24" width="2" height="2"/><rect x="7" y="30" width="2" height="2"/></g></svg>
<svg class="a" style="left:32.8px;top:103.6px" width="30" height="30"><use href="#win"/></svg>
<svg class="a" style="left:82.8px;top:103.6px" width="30" height="30"><use href="#folder"/></svg>
<svg class="a" style="left:132.6px;top:103.6px" width="30" height="30"><use href="#floppy"/></svg>
<svg class="a" style="left:183.0px;top:103.6px" width="30" height="30"><use href="#floppy2"/></svg>
<svg class="a" style="left:246.0px;top:103.6px" width="30" height="30"><use href="#play1"/></svg>
<svg class="a" style="left:296.7px;top:103.6px" width="30" height="30"><use href="#play"/></svg>
<svg class="a" style="left:360.8px;top:103.6px" width="30" height="30"><use href="#stopsq"/></svg>
<svg class="a" style="left:411.0px;top:103.6px" width="30" height="30"><use href="#garrow"/></svg>
<svg class="a" style="left:475.0px;top:103.6px" width="30" height="30"><use href="#pause"/></svg>
<svg class="a" style="left:524.6px;top:103.6px" width="30" height="30"><use href="#stepf"/></svg>
<svg class="a" style="left:588.6px;top:103.6px" width="30" height="30"><use href="#bulb"/></svg>
<div class="a" style="left:229.5px;top:107.0px;width:2px;height:24.0px;background:#d2d2d2;box-shadow:1px 0 0 #fafafa"></div>
<div class="a" style="left:343.7px;top:107.0px;width:2px;height:24.0px;background:#d2d2d2;box-shadow:1px 0 0 #fafafa"></div>
<div class="a" style="left:457.5px;top:107.0px;width:2px;height:24.0px;background:#d2d2d2;box-shadow:1px 0 0 #fafafa"></div>
<div class="a" style="left:571.7px;top:107.0px;width:2px;height:24.0px;background:#d2d2d2;box-shadow:1px 0 0 #fafafa"></div>
<div class="btn" style="left:282px;top:221px;width:48px;height:46px;background:#dedede;border-color:#b0b0b0"></div>
<svg class="a" style="left:27.0px;top:227.8px" width="30" height="30"><use href="#magm"/></svg>
<svg class="a" style="left:76.6px;top:227.8px" width="30" height="30"><use href="#mag1"/></svg>
<svg class="a" style="left:126.3px;top:227.8px" width="30" height="30"><use href="#magp"/></svg>
<svg class="a" style="left:179.0px;top:227.8px" width="30" height="30"><use href="#sliders"/></svg>
<svg class="a" style="left:239.4px;top:226.8px" width="32" height="32"><use href="#gc"/></svg>
<svg class="a" style="left:289.9px;top:226.8px" width="32" height="32"><use href="#rc"/></svg>
<svg class="a" style="left:353.8px;top:227.8px" width="30" height="30"><use href="#roi1"/></svg>
<svg class="a" style="left:404.3px;top:227.8px" width="30" height="30"><use href="#roi2"/></svg>
<svg class="a" style="left:454.0px;top:227.8px" width="30" height="30"><use href="#roi3"/></svg>
<svg class="a" style="left:504.0px;top:227.8px" width="30" height="30"><use href="#roi4"/></svg>
<svg class="a" style="left:553.7px;top:227.8px" width="30" height="30"><use href="#roi5"/></svg>
<svg class="a" style="left:604.2px;top:227.8px" width="30" height="30"><use href="#roi6"/></svg>
<svg class="a" style="left:653.9px;top:227.8px" width="30" height="30"><use href="#roi7"/></svg>
<svg class="a" style="left:704.0px;top:227.8px" width="30" height="30"><use href="#wrench"/></svg>
<svg class="a" style="left:766.5px;top:227.8px" width="30" height="30"><use href="#lens"/></svg>
<svg class="a" style="left:817.0px;top:227.8px" width="30" height="30"><use href="#pgarrow"/></svg>
<svg class="a" style="left:867.0px;top:227.8px" width="30" height="30"><use href="#pg2"/></svg>
<svg class="a" style="left:930.3px;top:227.8px" width="30" height="30"><use href="#floppy"/></svg>
<div class="a" style="left:223.5px;top:231.0px;width:2px;height:22.0px;background:#d2d2d2;box-shadow:1px 0 0 #fafafa"></div>
<div class="a" style="left:337.5px;top:231.0px;width:2px;height:22.0px;background:#d2d2d2;box-shadow:1px 0 0 #fafafa"></div>
<div class="a" style="left:750.0px;top:231.0px;width:2px;height:22.0px;background:#d2d2d2;box-shadow:1px 0 0 #fafafa"></div>
<div class="a" style="left:913.0px;top:231.0px;width:2px;height:22.0px;background:#d2d2d2;box-shadow:1px 0 0 #fafafa"></div>
<div class="btn" style="left:1718px;top:211px;width:48px;height:46px;background:#dedede;border-color:#b0b0b0"></div>
<svg class="a" style="left:1412.0px;top:218.0px" width="30" height="30"><use href="#magm"/></svg>
<svg class="a" style="left:1462.5px;top:218.0px" width="30" height="30"><use href="#mag1"/></svg>
<svg class="a" style="left:1513.0px;top:218.0px" width="30" height="30"><use href="#magp"/></svg>
<svg class="a" style="left:1562.0px;top:218.0px" width="30" height="30"><use href="#hand"/></svg>
<svg class="a" style="left:1613.5px;top:218.0px" width="30" height="30"><use href="#sliders"/></svg>
<svg class="a" style="left:1675.8px;top:217.0px" width="32" height="32"><use href="#gc"/></svg>
<svg class="a" style="left:1725.6px;top:217.0px" width="32" height="32"><use href="#rc"/></svg>
<svg class="a" style="left:1789.7px;top:218.0px" width="30" height="30"><use href="#grect"/></svg>
<svg class="a" style="left:1841.0px;top:218.0px" width="30" height="30"><use href="#arcic"/></svg>
<svg class="a" style="left:1903.9px;top:218.0px" width="30" height="30"><use href="#rf1"/></svg>
<svg class="a" style="left:1953.8px;top:218.0px" width="30" height="30"><use href="#rf2"/></svg>
<svg class="a" style="left:2003.7px;top:218.0px" width="30" height="30"><use href="#rf3"/></svg>
<svg class="a" style="left:2053.7px;top:218.0px" width="30" height="30"><use href="#rf4"/></svg>
<svg class="a" style="left:2116.0px;top:218.0px" width="30" height="30"><use href="#plus"/></svg>
<svg class="a" style="left:2167.8px;top:218.0px" width="30" height="30"><use href="#dline"/></svg>
<svg class="a" style="left:2218.7px;top:218.0px" width="30" height="30"><use href="#pline"/></svg>
<svg class="a" style="left:2268.2px;top:218.0px" width="30" height="30"><use href="#arcl"/></svg>
<svg class="a" style="left:2331.5px;top:218.0px" width="30" height="30"><use href="#hlines"/></svg>
<svg class="a" style="left:2412.0px;top:218.0px" width="30" height="30"><use href="#chev"/></svg>
<div class="a" style="left:1659.5px;top:222.0px;width:2px;height:23.0px;background:#d2d2d2;box-shadow:1px 0 0 #fafafa"></div>
<div class="a" style="left:1774.0px;top:222.0px;width:2px;height:23.0px;background:#d2d2d2;box-shadow:1px 0 0 #fafafa"></div>
<div class="a" style="left:1888.0px;top:222.0px;width:2px;height:23.0px;background:#d2d2d2;box-shadow:1px 0 0 #fafafa"></div>
<div class="a" style="left:2102.0px;top:222.0px;width:2px;height:23.0px;background:#d2d2d2;box-shadow:1px 0 0 #fafafa"></div>
<div class="a" style="left:2315.0px;top:222.0px;width:2px;height:23.0px;background:#d2d2d2;box-shadow:1px 0 0 #fafafa"></div>
<svg class="a" style="left:2487.7px;top:207.0px" width="28" height="28"><use href="#winwand"/></svg>
<svg class="a" style="left:2537.8px;top:207.0px" width="28" height="28"><use href="#lens"/></svg>
<svg class="a" style="left:2588.5px;top:207.0px" width="28" height="28"><use href="#windd"/></svg>
<svg class="a" style="left:2638.2px;top:207.0px" width="28" height="28"><use href="#tree"/></svg>
<svg class="a" style="left:2686.7px;top:207.0px" width="28" height="28"><use href="#arr"/></svg>
<svg class="a" style="left:2737.0px;top:207.0px" width="28" height="28"><use href="#tarr"/></svg>
<svg class="a" style="left:2788.0px;top:207.0px" width="28" height="28"><use href="#carr"/></svg>
<svg class="a" style="left:2838.0px;top:207.0px" width="28" height="28"><use href="#page"/></svg>
<svg class="a" style="left:2889.0px;top:207.0px" width="28" height="28"><use href="#gg"/></svg>
<svg class="a" style="left:2938.0px;top:207.0px" width="28" height="28"><use href="#rr"/></svg>
<svg class="a" style="left:2987.7px;top:207.0px" width="28" height="28"><use href="#stopsign"/></svg>
<svg class="a" style="left:3039.0px;top:207.0px" width="28" height="28"><use href="#bdot"/></svg>
<svg class="a" style="left:3125.8px;top:207.0px" width="28" height="28"><use href="#magn"/></svg>
<svg class="a" style="left:3166.5px;top:207.0px" width="28" height="28"><use href="#chev"/></svg><!--ICONPL_E-->
</body>
</html>
